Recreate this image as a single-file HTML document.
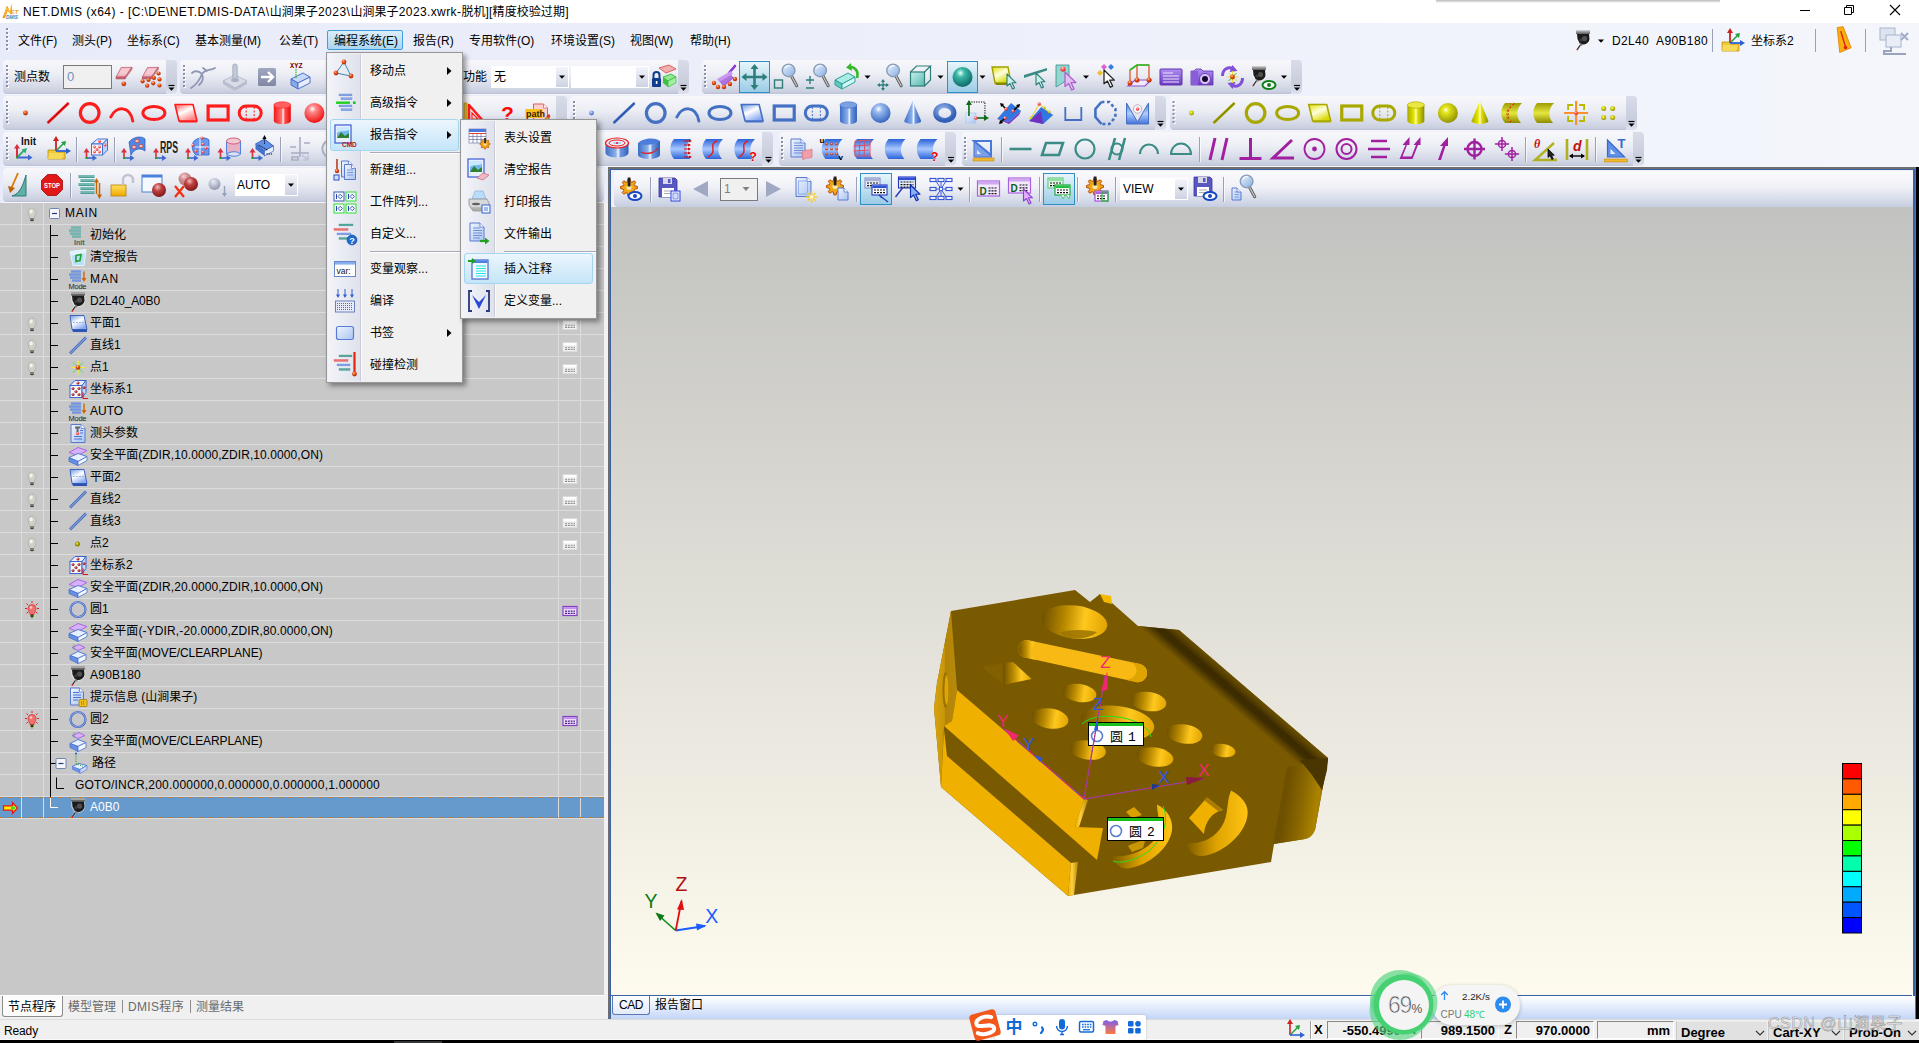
<!DOCTYPE html>
<html lang="zh"><head><meta charset="utf-8"><title>NET.DMIS</title><style>
html,body{margin:0;padding:0}
body{width:1919px;height:1043px;position:relative;overflow:hidden;background:linear-gradient(90deg,#e8ebf9 0%,#edf0fa 50%,#f4f6fc 100%);font-family:"Liberation Sans","Noto Sans CJK SC",sans-serif;font-size:12px;color:#000;line-height:1}
.a{position:absolute}
.t{position:absolute;white-space:nowrap;line-height:16px;height:16px}
.tb{position:absolute;background:linear-gradient(#f8f8fb 0%,#eceef5 42%,#d7dbe8 76%,#c9cfdf 94%,#bac1d6 100%);border-radius:4px 0 0 4px;box-shadow:0 1px 0 #f5f6fb}
.ov{position:absolute;width:11px;background:linear-gradient(#d9dce9 0%,#c8cddd 70%,#dfe2ee 100%);border-radius:0 4px 4px 0;box-shadow:0 1px 0 #f5f6fb}
.grip{position:absolute;width:2px;border-left:2px dotted #9aa0b8}
svg{position:absolute;overflow:visible}
</style></head><body>
<div class="a" style="left:0px;top:0px;width:1919px;height:23px;background:#fff"></div>
<div class="t" style="left:23px;top:4px;letter-spacing:0.445px;font-size:12px">NET.DMIS (x64) - [C:\DE\NET.DMIS-DATA\</div>
<div class="t" style="left:269.8px;top:4px;letter-spacing:-0.004px;font-size:12px">山涧果子</div>
<div class="t" style="left:317.9px;top:4px;letter-spacing:0.494px;font-size:12px">2023\</div>
<div class="t" style="left:350.6px;top:4px;letter-spacing:-0.004px;font-size:12px">山涧果子</div>
<div class="t" style="left:398.8px;top:4px;letter-spacing:0.381px;font-size:12px">2023.xwrk-</div>
<div class="t" style="left:461.5px;top:4px;letter-spacing:-0.008px;font-size:12px">脱机</div>
<div class="t" style="left:485.6px;top:4px;letter-spacing:0.164px;font-size:12px">][</div>
<div class="t" style="left:492.6px;top:4px;letter-spacing:0.064px;font-size:12px">精度校验过期</div>
<div class="t" style="left:565.2px;top:4px;letter-spacing:0.056px;font-size:12px">]</div>
<div class="a" style="left:327px;top:30px;width:76px;height:20px;background:linear-gradient(#dcedfa,#a9d6f1);border:1px solid #3e9fdb;border-radius:2px;box-sizing:border-box"></div>
<div class="t" style="left:18px;top:33px;">文件(F)</div>
<div class="t" style="left:72px;top:33px;">测头(P)</div>
<div class="t" style="left:127px;top:33px;">坐标系(C)</div>
<div class="t" style="left:195px;top:33px;">基本测量(M)</div>
<div class="t" style="left:279px;top:33px;">公差(T)</div>
<div class="t" style="left:334px;top:33px;">编程系统(E)</div>
<div class="t" style="left:413px;top:33px;">报告(R)</div>
<div class="t" style="left:469px;top:33px;">专用软件(O)</div>
<div class="t" style="left:551px;top:33px;">环境设置(S)</div>
<div class="t" style="left:630px;top:33px;">视图(W)</div>
<div class="t" style="left:690px;top:33px;">帮助(H)</div>
<div class="t" style="left:1612px;top:33px;letter-spacing:0.325px;">D2L40</div>
<div class="t" style="left:1656px;top:33px;letter-spacing:0.373px;">A90B180</div>
<div class="t" style="left:1751px;top:33px;">坐标系2</div>
<div class="tb" style="left:3px;top:60px;width:163px;height:34px"></div>
<div class="ov" style="left:166px;top:60px;height:34px"></div>
<div class="tb" style="left:180px;top:60px;width:498px;height:34px"></div>
<div class="ov" style="left:678px;top:60px;height:34px"></div>
<div class="tb" style="left:702px;top:60px;width:589px;height:34px"></div>
<div class="ov" style="left:1291px;top:60px;height:34px"></div>
<div class="tb" style="left:3px;top:96px;width:553px;height:34px"></div>
<div class="ov" style="left:556px;top:96px;height:34px"></div>
<div class="tb" style="left:570px;top:96px;width:585px;height:34px"></div>
<div class="ov" style="left:1155px;top:96px;height:34px"></div>
<div class="tb" style="left:1170px;top:96px;width:456px;height:34px"></div>
<div class="ov" style="left:1626px;top:96px;height:34px"></div>
<div class="tb" style="left:3px;top:132px;width:759px;height:34px"></div>
<div class="ov" style="left:762px;top:132px;height:34px"></div>
<div class="tb" style="left:779px;top:132px;width:166px;height:34px"></div>
<div class="ov" style="left:945px;top:132px;height:34px"></div>
<div class="tb" style="left:962px;top:132px;width:671px;height:34px"></div>
<div class="ov" style="left:1633px;top:132px;height:34px"></div>
<div class="tb" style="left:3px;top:168px;width:601px;height:34px;border-radius:4px"></div>
<div class="a" style="left:0px;top:203px;width:604px;height:792px;background:#c8c8c8"></div>
<div class="a" style="left:0px;top:224px;width:604px;height:1px;background:#dcdcdc"></div>
<div class="t" style="left:65px;top:205px;letter-spacing:0.750px;">MAIN</div>
<div class="a" style="left:0px;top:246px;width:604px;height:1px;background:#dcdcdc"></div>
<div class="t" style="left:90px;top:227px;">初始化</div>
<div class="a" style="left:0px;top:268px;width:604px;height:1px;background:#dcdcdc"></div>
<div class="t" style="left:90px;top:249px;">清空报告</div>
<div class="a" style="left:0px;top:290px;width:604px;height:1px;background:#dcdcdc"></div>
<div class="t" style="left:90px;top:271px;letter-spacing:0.776px;">MAN</div>
<div class="a" style="left:0px;top:312px;width:604px;height:1px;background:#dcdcdc"></div>
<div class="t" style="left:90px;top:293px;letter-spacing:-0.139px;">D2L40_A0B0</div>
<div class="a" style="left:0px;top:334px;width:604px;height:1px;background:#dcdcdc"></div>
<div class="t" style="left:90px;top:315px;">平面1</div>
<div class="a" style="left:0px;top:356px;width:604px;height:1px;background:#dcdcdc"></div>
<div class="t" style="left:90px;top:337px;">直线1</div>
<div class="a" style="left:0px;top:378px;width:604px;height:1px;background:#dcdcdc"></div>
<div class="t" style="left:90px;top:359px;">点1</div>
<div class="a" style="left:0px;top:400px;width:604px;height:1px;background:#dcdcdc"></div>
<div class="t" style="left:90px;top:381px;">坐标系1</div>
<div class="a" style="left:0px;top:422px;width:604px;height:1px;background:#dcdcdc"></div>
<div class="t" style="left:90px;top:403px;">AUTO</div>
<div class="a" style="left:0px;top:444px;width:604px;height:1px;background:#dcdcdc"></div>
<div class="t" style="left:90px;top:425px;">测头参数</div>
<div class="a" style="left:0px;top:466px;width:604px;height:1px;background:#dcdcdc"></div>
<div class="t" style="left:90px;top:447px;letter-spacing:0.086px;">安全平面(ZDIR,10.0000,ZDIR,10.0000,ON)</div>
<div class="a" style="left:0px;top:488px;width:604px;height:1px;background:#dcdcdc"></div>
<div class="t" style="left:90px;top:469px;">平面2</div>
<div class="a" style="left:0px;top:510px;width:604px;height:1px;background:#dcdcdc"></div>
<div class="t" style="left:90px;top:491px;">直线2</div>
<div class="a" style="left:0px;top:532px;width:604px;height:1px;background:#dcdcdc"></div>
<div class="t" style="left:90px;top:513px;">直线3</div>
<div class="a" style="left:0px;top:554px;width:604px;height:1px;background:#dcdcdc"></div>
<div class="t" style="left:90px;top:535px;">点2</div>
<div class="a" style="left:0px;top:576px;width:604px;height:1px;background:#dcdcdc"></div>
<div class="t" style="left:90px;top:557px;">坐标系2</div>
<div class="a" style="left:0px;top:598px;width:604px;height:1px;background:#dcdcdc"></div>
<div class="t" style="left:90px;top:579px;letter-spacing:0.086px;">安全平面(ZDIR,20.0000,ZDIR,10.0000,ON)</div>
<div class="a" style="left:0px;top:620px;width:604px;height:1px;background:#dcdcdc"></div>
<div class="t" style="left:90px;top:601px;">圆1</div>
<div class="a" style="left:0px;top:642px;width:604px;height:1px;background:#dcdcdc"></div>
<div class="t" style="left:90px;top:623px;letter-spacing:0.118px;">安全平面(-YDIR,-20.0000,ZDIR,80.0000,ON)</div>
<div class="a" style="left:0px;top:664px;width:604px;height:1px;background:#dcdcdc"></div>
<div class="t" style="left:90px;top:645px;letter-spacing:-0.073px;">安全平面(MOVE/CLEARPLANE)</div>
<div class="a" style="left:0px;top:686px;width:604px;height:1px;background:#dcdcdc"></div>
<div class="t" style="left:90px;top:667px;letter-spacing:0.230px;">A90B180</div>
<div class="a" style="left:0px;top:708px;width:604px;height:1px;background:#dcdcdc"></div>
<div class="t" style="left:90px;top:689px;">提示信息 (山涧果子)</div>
<div class="a" style="left:0px;top:730px;width:604px;height:1px;background:#dcdcdc"></div>
<div class="t" style="left:90px;top:711px;">圆2</div>
<div class="a" style="left:0px;top:752px;width:604px;height:1px;background:#dcdcdc"></div>
<div class="t" style="left:90px;top:733px;letter-spacing:-0.073px;">安全平面(MOVE/CLEARPLANE)</div>
<div class="a" style="left:0px;top:774px;width:604px;height:1px;background:#dcdcdc"></div>
<div class="t" style="left:92px;top:755px;">路径</div>
<div class="a" style="left:0px;top:796px;width:604px;height:1px;background:#dcdcdc"></div>
<div class="t" style="left:75px;top:777px;letter-spacing:0.220px;">GOTO/INCR,200.000000,0.000000,0.000000,1.000000</div>
<div class="a" style="left:0px;top:797px;width:604px;height:21px;background:#6699cc"></div>
<div class="a" style="left:0px;top:818px;width:604px;height:1px;background:#dcdcdc"></div>
<div class="t" style="left:90px;top:799px;color:#fff">A0B0</div>
<div class="a" style="left:21px;top:203px;width:1px;height:615px;background:#dcdcdc"></div>
<div class="a" style="left:43px;top:203px;width:1px;height:615px;background:#dcdcdc"></div>
<div class="a" style="left:558px;top:203px;width:1px;height:615px;background:#dcdcdc"></div>
<div class="a" style="left:580px;top:203px;width:1px;height:615px;background:#dcdcdc"></div>
<svg style="left:0;top:0" width="611" height="1043" viewBox="0 0 611 1043">
<path d="M50.5 225V797" stroke="#000" stroke-width="1"/>
<path d="M50 235.5H58" stroke="#000" stroke-width="1"/>
<path d="M50 257.5H58" stroke="#000" stroke-width="1"/>
<path d="M50 279.5H58" stroke="#000" stroke-width="1"/>
<path d="M50 301.5H58" stroke="#000" stroke-width="1"/>
<path d="M50 323.5H58" stroke="#000" stroke-width="1"/>
<path d="M50 345.5H58" stroke="#000" stroke-width="1"/>
<path d="M50 367.5H58" stroke="#000" stroke-width="1"/>
<path d="M50 389.5H58" stroke="#000" stroke-width="1"/>
<path d="M50 411.5H58" stroke="#000" stroke-width="1"/>
<path d="M50 433.5H58" stroke="#000" stroke-width="1"/>
<path d="M50 455.5H58" stroke="#000" stroke-width="1"/>
<path d="M50 477.5H58" stroke="#000" stroke-width="1"/>
<path d="M50 499.5H58" stroke="#000" stroke-width="1"/>
<path d="M50 521.5H58" stroke="#000" stroke-width="1"/>
<path d="M50 543.5H58" stroke="#000" stroke-width="1"/>
<path d="M50 565.5H58" stroke="#000" stroke-width="1"/>
<path d="M50 587.5H58" stroke="#000" stroke-width="1"/>
<path d="M50 609.5H58" stroke="#000" stroke-width="1"/>
<path d="M50 631.5H58" stroke="#000" stroke-width="1"/>
<path d="M50 653.5H58" stroke="#000" stroke-width="1"/>
<path d="M50 675.5H58" stroke="#000" stroke-width="1"/>
<path d="M50 697.5H58" stroke="#000" stroke-width="1"/>
<path d="M50 719.5H58" stroke="#000" stroke-width="1"/>
<path d="M50 741.5H58" stroke="#000" stroke-width="1"/>
<path d="M50 763.5H56" stroke="#000" stroke-width="1"/>
<path d="M56.5 777.5V788.5H64" fill="none" stroke="#000" stroke-width="1"/>
<path d="M50.5 797V807.5H58" fill="none" stroke="#fff" stroke-width="1"/>
<path d="M0 797.500H604M0 817.500H604" stroke="#c86a10" stroke-width="1" stroke-dasharray="1 1.5"/>
<rect x="49.5" y="208.5" width="10" height="10" rx="1" fill="#f4f6fc" stroke="#7088b0" stroke-width="1"/><path d="M52.0 213.5H57.0" stroke="#283c70" stroke-width="1.2"/>
<rect x="56" y="758.5" width="10" height="10" rx="1" fill="#f4f6fc" stroke="#7088b0" stroke-width="1"/><path d="M58.5 763.5H63.5" stroke="#283c70" stroke-width="1.2"/>
<g transform="translate(78,235.5)"><path d="M-7 -8H3M-9 -5H3M-8 -2H3M-6 1H3" stroke="#4a9c94" stroke-width="1.9"/><path d="M-7 -8.300H3M-9 -5.300H3M-8 -2.300H3M-6 .7H3" stroke="#a8dcd8" stroke-width=".6"/><text x="-4" y="9" font-size="7" font-weight="bold" fill="#2c6c68" font-family="Liberation Sans,sans-serif">Init</text></g>
<g transform="translate(78,257.5)"><path d="M-8 -6L8 -8L6 8H-5Z" fill="#b8e0f8" stroke="#e8f4fc" stroke-width="1"/><path d="M-8 -6L8 -8L7 -4L-7 -2Z" fill="#e0f2fc"/><path d="M-2 -2L3 -3L2 3L-2 4Z" fill="none" stroke="#20a030" stroke-width="1.6"/></g>
<g transform="translate(78,279.5)"><path d="M-7 -8H3M-9 -5H3M-8 -2H3M-6 1H3" stroke="#4a78d8" stroke-width="1.9"/><path d="M-7 -8.300H3M-9 -5.300H3M-8 -2.300H3M-6 .7H3" stroke="#a8c4f8" stroke-width=".6"/><path d="M6 -8V0" stroke="#d06800" stroke-width="1.4"/><path d="M3.5 -1.5L6 2.5L8.5 -1.5Z" fill="#d06800"/><text x="-9.5" y="9.5" font-size="7.5" fill="#222" font-family="Liberation Sans,sans-serif" textLength="18">Mode</text></g>
<g transform="translate(78,301.5)"><g transform="translate(0,0)"><g transform="scale(1)"><path d="M-6.500 -6.500H6.500L7 -1C6.500 3.500 2 5.500 -1 5L-3.500 4.500L-6.500 -1Z" fill="#fff" opacity=".55" stroke="#fff" stroke-width="1.200" stroke-opacity=".5"/><rect x="-7" y="-9.500" width="14" height="3.500" fill="#a4a4a4"/><rect x="-7" y="-7.500" width="14" height="1.500" fill="#6a6a6a"/><path d="M-6 -6H6L6.500 -1C6 3 2 5 -1 4.500L-3 4L-5.500 -1Z" fill="#1c1c1c"/><circle cx="1.500" cy="-1.500" r="2.600" fill="#505050"/><circle cx="-2" cy="0" r="1.600" fill="#3a3a3a"/><path d="M-2 4L-5.500 9.200" stroke="#fff" stroke-width="2.400" opacity=".5"/><path d="M-2 4L-5.500 9.200" stroke="#2a2a2a" stroke-width="1.300"/><path d="M-3 3L0 5L-2.500 6.500Z" fill="#888"/><circle cx="-5.700" cy="9.500" r=".85" fill="#e01010"/></g></g></g>
<g transform="translate(78,323.5)"><path d="M-8 -8H6L9 6H-6Z" fill="url(#pgB)" stroke="#3c64c0" stroke-width="1"/><path d="M-6 6H9V8.5H-5Z" fill="#2c54b0"/><path d="M-5 -1H6" stroke="#8aa4d8" stroke-width=".8" stroke-dasharray="2 1"/></g>
<g transform="translate(78,345.5)"><path d="M-8 8L8 -8" stroke="#3c64c0" stroke-width="2.6"/><path d="M-8 8L8 -8" stroke="#c8d8f8" stroke-width=".8"/></g>
<g transform="translate(78,367.5)"><path d="M-7 0H7M0 -7V7" stroke="#f0f020" stroke-width="1.2"/><path d="M-5 -5L5 5M-5 5L5 -5" stroke="#40e040" stroke-width=".9"/><circle cx="0" cy="0" r="2.3" fill="url(#rsO)"/></g>
<g transform="translate(78,389.5)"><path d="M-8 -4L-3 -9H8L4 -4Z" fill="#e8f0ff" stroke="#3c64d0" stroke-width="1"/><rect x="-8" y="-4" width="12" height="12" fill="#f4f8ff" stroke="#3c64d0" stroke-width="1"/><path d="M4 -4L8 -9V3L4 8Z" fill="#c8d8f8" stroke="#3c64d0" stroke-width="1"/><circle cx="-5" cy="-1" r="1.5" fill="url(#rsD)"/><circle cx="1" cy="-1" r="1.5" fill="url(#rsD)"/><circle cx="-5" cy="5" r="1.5" fill="url(#rsD)"/><circle cx="1" cy="5" r="1.5" fill="url(#rsD)"/><circle cx="-2" cy="2" r="1.5" fill="url(#rsD)"/><circle cx="0" cy="-6.5" r="1.5" fill="url(#rsD)"/><circle cx="6" cy="-2" r="1.5" fill="url(#rsD)"/><path d="M5 9V3M5 9H10" stroke="#d02020" stroke-width="1.2"/></g>
<g transform="translate(78,411.5)"><path d="M-7 -8H3M-9 -5H3M-8 -2H3M-6 1H3" stroke="#4a78d8" stroke-width="1.9"/><path d="M-7 -8.300H3M-9 -5.300H3M-8 -2.300H3M-6 .7H3" stroke="#a8c4f8" stroke-width=".6"/><path d="M6 -8V0" stroke="#d06800" stroke-width="1.4"/><path d="M3.5 -1.5L6 2.5L8.5 -1.5Z" fill="#d06800"/><text x="-9.5" y="9.5" font-size="7.5" fill="#222" font-family="Liberation Sans,sans-serif" textLength="18">Mode</text></g>
<g transform="translate(78,433.5)"><g transform="translate(0,0)"><path d="M-7.0 -9.0H3.0L7.0 -5.0V9.0H-7.0Z" fill="url(#docG)" stroke="#5a7ad0" stroke-width="1"/><path d="M3.0 -9.0V-5.0H7.0" fill="#fff" stroke="#5a7ad0" stroke-width=".8"/></g><path d="M-3 -6H2M-.5 -6V-1" stroke="#666" stroke-width="2"/><circle cx="-0.5" cy="0" r="1.6" fill="url(#rsR)"/><path d="M-4 3H4M-4 5.5H4M2 -3H5M2 -.5H5" stroke="#3c64d0" stroke-width=".9"/></g>
<g transform="translate(78,455.5)"><path d="M-9 -3L0 -8L9 -5L0 0Z" fill="#d8b0f8" stroke="#a060e0" stroke-width=".9"/><path d="M-9 2L0 -2L9 1L0 6Z" fill="#e8f0ff" stroke="#4a70d0" stroke-width=".9"/><path d="M-9 2V6L0 10V6Z" fill="#6890e0" stroke="#4a70d0" stroke-width=".8"/><path d="M0 6L9 1V5L0 10Z" fill="#f4f8ff" stroke="#4a70d0" stroke-width=".8"/></g>
<g transform="translate(78,477.5)"><path d="M-8 -8H6L9 6H-6Z" fill="url(#pgB)" stroke="#3c64c0" stroke-width="1"/><path d="M-6 6H9V8.5H-5Z" fill="#2c54b0"/><path d="M-5 -1H6" stroke="#8aa4d8" stroke-width=".8" stroke-dasharray="2 1"/></g>
<g transform="translate(78,499.5)"><path d="M-8 8L8 -8" stroke="#3c64c0" stroke-width="2.6"/><path d="M-8 8L8 -8" stroke="#c8d8f8" stroke-width=".8"/></g>
<g transform="translate(78,521.5)"><path d="M-8 8L8 -8" stroke="#3c64c0" stroke-width="2.6"/><path d="M-8 8L8 -8" stroke="#c8d8f8" stroke-width=".8"/></g>
<g transform="translate(78,543.5)"><circle cx="-.5" cy=".5" r="2.500" fill="#8c8c00"/><circle cx="-1" cy="0" r="1.300" fill="#d8d820"/></g>
<g transform="translate(78,565.5)"><path d="M-8 -4L-3 -9H8L4 -4Z" fill="#e8f0ff" stroke="#3c64d0" stroke-width="1"/><rect x="-8" y="-4" width="12" height="12" fill="#f4f8ff" stroke="#3c64d0" stroke-width="1"/><path d="M4 -4L8 -9V3L4 8Z" fill="#c8d8f8" stroke="#3c64d0" stroke-width="1"/><circle cx="-5" cy="-1" r="1.5" fill="url(#rsD)"/><circle cx="1" cy="-1" r="1.5" fill="url(#rsD)"/><circle cx="-5" cy="5" r="1.5" fill="url(#rsD)"/><circle cx="1" cy="5" r="1.5" fill="url(#rsD)"/><circle cx="-2" cy="2" r="1.5" fill="url(#rsD)"/><circle cx="0" cy="-6.5" r="1.5" fill="url(#rsD)"/><circle cx="6" cy="-2" r="1.5" fill="url(#rsD)"/><path d="M5 9V3M5 9H10" stroke="#d02020" stroke-width="1.2"/></g>
<g transform="translate(78,587.5)"><path d="M-9 -3L0 -8L9 -5L0 0Z" fill="#d8b0f8" stroke="#a060e0" stroke-width=".9"/><path d="M-9 2L0 -2L9 1L0 6Z" fill="#e8f0ff" stroke="#4a70d0" stroke-width=".9"/><path d="M-9 2V6L0 10V6Z" fill="#6890e0" stroke="#4a70d0" stroke-width=".8"/><path d="M0 6L9 1V5L0 10Z" fill="#f4f8ff" stroke="#4a70d0" stroke-width=".8"/></g>
<g transform="translate(78,609.5)"><circle r="7.500" fill="none" stroke="#3c60c0" stroke-width="2.200"/><circle r="7.500" fill="none" stroke="#a8c0f0" stroke-width=".8"/></g>
<g transform="translate(78,631.5)"><path d="M-9 -3L0 -8L9 -5L0 0Z" fill="#d8b0f8" stroke="#a060e0" stroke-width=".9"/><path d="M-9 2L0 -2L9 1L0 6Z" fill="#e8f0ff" stroke="#4a70d0" stroke-width=".9"/><path d="M-9 2V6L0 10V6Z" fill="#6890e0" stroke="#4a70d0" stroke-width=".8"/><path d="M0 6L9 1V5L0 10Z" fill="#f4f8ff" stroke="#4a70d0" stroke-width=".8"/></g>
<g transform="translate(78,653.5)"><path d="M-6 -6L1 -9L7 -6L0 -3Z" fill="#d8b0f8" stroke="#a060e0" stroke-width=".9"/><path d="M-4 -9V-3" stroke="#20b020" stroke-width="1" stroke-dasharray="1 1"/><path d="M-8 2L0 -2L8 1L0 5Z" fill="#e8f0ff" stroke="#4a70d0" stroke-width=".9"/><path d="M-8 2V6L0 10V5Z" fill="#6890e0" stroke="#4a70d0" stroke-width=".8"/><path d="M0 5L8 1V6L0 10Z" fill="#f4f8ff" stroke="#4a70d0" stroke-width=".8"/></g>
<g transform="translate(78,675.5)"><g transform="translate(0,0)"><g transform="scale(1)"><path d="M-6.500 -6.500H6.500L7 -1C6.500 3.500 2 5.500 -1 5L-3.500 4.500L-6.500 -1Z" fill="#fff" opacity=".55" stroke="#fff" stroke-width="1.200" stroke-opacity=".5"/><rect x="-7" y="-9.500" width="14" height="3.500" fill="#a4a4a4"/><rect x="-7" y="-7.500" width="14" height="1.500" fill="#6a6a6a"/><path d="M-6 -6H6L6.500 -1C6 3 2 5 -1 4.500L-3 4L-5.500 -1Z" fill="#1c1c1c"/><circle cx="1.500" cy="-1.500" r="2.600" fill="#505050"/><circle cx="-2" cy="0" r="1.600" fill="#3a3a3a"/><path d="M-2 4L-5.500 9.200" stroke="#fff" stroke-width="2.400" opacity=".5"/><path d="M-2 4L-5.500 9.200" stroke="#2a2a2a" stroke-width="1.300"/><path d="M-3 3L0 5L-2.500 6.500Z" fill="#888"/><circle cx="-5.700" cy="9.500" r=".85" fill="#e01010"/></g></g></g>
<g transform="translate(78,697.5)"><g transform="translate(-1,-1)"><path d="M-6.5 -8.5H2.5L6.5 -4.5V8.5H-6.5Z" fill="url(#docG)" stroke="#5a7ad0" stroke-width="1"/><path d="M2.5 -8.5V-4.5H6.5" fill="#fff" stroke="#5a7ad0" stroke-width=".8"/></g><path d="M-5 -5H1M-5 -2.5H3M-5 0H3M-5 2.5H0" stroke="#3c64d0" stroke-width=".9"/><rect x="1" y="2" width="8" height="7" rx="1" fill="#f0c020" stroke="#a07000" stroke-width=".7"/><path d="M3 4.5H7M3 6.5H7" stroke="#604000" stroke-width=".8" stroke-dasharray="1 1"/></g>
<g transform="translate(78,719.5)"><circle r="7.500" fill="none" stroke="#3c60c0" stroke-width="2.200"/><circle r="7.500" fill="none" stroke="#a8c0f0" stroke-width=".8"/></g>
<g transform="translate(78,741.5)"><path d="M-6 -6L1 -9L7 -6L0 -3Z" fill="#d8b0f8" stroke="#a060e0" stroke-width=".9"/><path d="M-4 -9V-3" stroke="#20b020" stroke-width="1" stroke-dasharray="1 1"/><path d="M-8 2L0 -2L8 1L0 5Z" fill="#e8f0ff" stroke="#4a70d0" stroke-width=".9"/><path d="M-8 2V6L0 10V5Z" fill="#6890e0" stroke="#4a70d0" stroke-width=".8"/><path d="M0 5L8 1V6L0 10Z" fill="#f4f8ff" stroke="#4a70d0" stroke-width=".8"/></g>
<g transform="translate(78,807.5)"><g transform="translate(0,0)"><g transform="scale(1)"><path d="M-6.500 -6.500H6.500L7 -1C6.500 3.500 2 5.500 -1 5L-3.500 4.500L-6.500 -1Z" fill="#fff" opacity=".55" stroke="#fff" stroke-width="1.200" stroke-opacity=".5"/><rect x="-7" y="-9.500" width="14" height="3.500" fill="#a4a4a4"/><rect x="-7" y="-7.500" width="14" height="1.500" fill="#6a6a6a"/><path d="M-6 -6H6L6.500 -1C6 3 2 5 -1 4.500L-3 4L-5.500 -1Z" fill="#1c1c1c"/><circle cx="1.500" cy="-1.500" r="2.600" fill="#505050"/><circle cx="-2" cy="0" r="1.600" fill="#3a3a3a"/><path d="M-2 4L-5.500 9.200" stroke="#fff" stroke-width="2.400" opacity=".5"/><path d="M-2 4L-5.500 9.200" stroke="#2a2a2a" stroke-width="1.300"/><path d="M-3 3L0 5L-2.500 6.500Z" fill="#888"/><circle cx="-5.700" cy="9.500" r=".85" fill="#e01010"/></g></g></g>
<g transform="translate(80,763.5)"><path d="M-8 3L-1 0L7 2L0 6Z" fill="#e8f0ff" stroke="#4a70d0" stroke-width=".9"/><path d="M-8 3V6L0 10V6Z" fill="#6890e0"/><path d="M0 6L7 2V6L0 10Z" fill="#c8d8f8" stroke="#4a70d0" stroke-width=".6"/><path d="M-4 -10V0L3 3" fill="none" stroke="#20a020" stroke-width="1" stroke-dasharray="1.2 1.2"/><circle cx="-4" cy="-10" r="1" fill="#2060d0"/></g>
<g transform="translate(32,214.5)"><path d="M0 -6.5A4 4.3 0 0 1 4 -2C4 1 2 2 2 4H-2C-2 2 -4 1 -4 -2A4 4.3 0 0 1 0 -6.5Z" fill="#cfcfc6" stroke="#a8a8a0" stroke-width=".6"/><ellipse cx="-.8" cy="-3" rx="1.6" ry="2" fill="#f4f4ec"/><rect x="-1.6" y="4" width="3.2" height="2.6" fill="#3a3a3a"/><circle cx="0" cy="5" r=".6" fill="#d0d0a0"/></g>
<g transform="translate(32,324.5)"><path d="M0 -6.5A4 4.3 0 0 1 4 -2C4 1 2 2 2 4H-2C-2 2 -4 1 -4 -2A4 4.3 0 0 1 0 -6.5Z" fill="#cfcfc6" stroke="#a8a8a0" stroke-width=".6"/><ellipse cx="-.8" cy="-3" rx="1.6" ry="2" fill="#f4f4ec"/><rect x="-1.6" y="4" width="3.2" height="2.6" fill="#3a3a3a"/><circle cx="0" cy="5" r=".6" fill="#d0d0a0"/></g>
<g transform="translate(32,346.5)"><path d="M0 -6.5A4 4.3 0 0 1 4 -2C4 1 2 2 2 4H-2C-2 2 -4 1 -4 -2A4 4.3 0 0 1 0 -6.5Z" fill="#cfcfc6" stroke="#a8a8a0" stroke-width=".6"/><ellipse cx="-.8" cy="-3" rx="1.6" ry="2" fill="#f4f4ec"/><rect x="-1.6" y="4" width="3.2" height="2.6" fill="#3a3a3a"/><circle cx="0" cy="5" r=".6" fill="#d0d0a0"/></g>
<g transform="translate(32,368.5)"><path d="M0 -6.5A4 4.3 0 0 1 4 -2C4 1 2 2 2 4H-2C-2 2 -4 1 -4 -2A4 4.3 0 0 1 0 -6.5Z" fill="#cfcfc6" stroke="#a8a8a0" stroke-width=".6"/><ellipse cx="-.8" cy="-3" rx="1.6" ry="2" fill="#f4f4ec"/><rect x="-1.6" y="4" width="3.2" height="2.6" fill="#3a3a3a"/><circle cx="0" cy="5" r=".6" fill="#d0d0a0"/></g>
<g transform="translate(32,478.5)"><path d="M0 -6.5A4 4.3 0 0 1 4 -2C4 1 2 2 2 4H-2C-2 2 -4 1 -4 -2A4 4.3 0 0 1 0 -6.5Z" fill="#cfcfc6" stroke="#a8a8a0" stroke-width=".6"/><ellipse cx="-.8" cy="-3" rx="1.6" ry="2" fill="#f4f4ec"/><rect x="-1.6" y="4" width="3.2" height="2.6" fill="#3a3a3a"/><circle cx="0" cy="5" r=".6" fill="#d0d0a0"/></g>
<g transform="translate(32,500.5)"><path d="M0 -6.5A4 4.3 0 0 1 4 -2C4 1 2 2 2 4H-2C-2 2 -4 1 -4 -2A4 4.3 0 0 1 0 -6.5Z" fill="#cfcfc6" stroke="#a8a8a0" stroke-width=".6"/><ellipse cx="-.8" cy="-3" rx="1.6" ry="2" fill="#f4f4ec"/><rect x="-1.6" y="4" width="3.2" height="2.6" fill="#3a3a3a"/><circle cx="0" cy="5" r=".6" fill="#d0d0a0"/></g>
<g transform="translate(32,522.5)"><path d="M0 -6.5A4 4.3 0 0 1 4 -2C4 1 2 2 2 4H-2C-2 2 -4 1 -4 -2A4 4.3 0 0 1 0 -6.5Z" fill="#cfcfc6" stroke="#a8a8a0" stroke-width=".6"/><ellipse cx="-.8" cy="-3" rx="1.6" ry="2" fill="#f4f4ec"/><rect x="-1.6" y="4" width="3.2" height="2.6" fill="#3a3a3a"/><circle cx="0" cy="5" r=".6" fill="#d0d0a0"/></g>
<g transform="translate(32,544.5)"><path d="M0 -6.5A4 4.3 0 0 1 4 -2C4 1 2 2 2 4H-2C-2 2 -4 1 -4 -2A4 4.3 0 0 1 0 -6.5Z" fill="#cfcfc6" stroke="#a8a8a0" stroke-width=".6"/><ellipse cx="-.8" cy="-3" rx="1.6" ry="2" fill="#f4f4ec"/><rect x="-1.6" y="4" width="3.2" height="2.6" fill="#3a3a3a"/><circle cx="0" cy="5" r=".6" fill="#d0d0a0"/></g>
<g transform="translate(32,610.5)"><path d="M-7 -2H-5M5 -2H7M-5.5 -7L-4 -5.5M5.5 -7L4 -5.5M0 -9.5V-7.5M-5.5 3L-4 1.5M5.5 3L4 1.5" stroke="#e02020" stroke-width="1"/><path d="M0 -6A4 4 0 0 1 4 -2C4 1 2 2 2 4H-2C-2 2 -4 1 -4 -2A4 4 0 0 1 0 -6Z" fill="#f07070" stroke="#d03030" stroke-width=".7"/><circle cx="-1" cy="-3" r="1.3" fill="#ffd0d0"/><rect x="-1.5" y="4" width="3" height="2.5" fill="#404000"/><path d="M0 6.5V8" stroke="#30a030" stroke-width="1.2"/></g>
<g transform="translate(32,720.5)"><path d="M-7 -2H-5M5 -2H7M-5.5 -7L-4 -5.5M5.5 -7L4 -5.5M0 -9.5V-7.5M-5.5 3L-4 1.5M5.5 3L4 1.5" stroke="#e02020" stroke-width="1"/><path d="M0 -6A4 4 0 0 1 4 -2C4 1 2 2 2 4H-2C-2 2 -4 1 -4 -2A4 4 0 0 1 0 -6Z" fill="#f07070" stroke="#d03030" stroke-width=".7"/><circle cx="-1" cy="-3" r="1.3" fill="#ffd0d0"/><rect x="-1.5" y="4" width="3" height="2.5" fill="#404000"/><path d="M0 6.5V8" stroke="#30a030" stroke-width="1.2"/></g>
<g transform="translate(570,325.0)"><rect x="-7" y="-4.5" width="14" height="9" fill="#f4f4f4" stroke="#dadada" stroke-width="1"/><rect x="-6.4" y="-3.9" width="12.8" height="1.8" fill="#fff"/><path d="M-5 .2H5M-5 2.4H5" stroke="#8a8a8a" stroke-width="1.1" stroke-dasharray="2 .8"/></g>
<g transform="translate(570,347.0)"><rect x="-7" y="-4.5" width="14" height="9" fill="#f4f4f4" stroke="#dadada" stroke-width="1"/><rect x="-6.4" y="-3.9" width="12.8" height="1.8" fill="#fff"/><path d="M-5 .2H5M-5 2.4H5" stroke="#8a8a8a" stroke-width="1.1" stroke-dasharray="2 .8"/></g>
<g transform="translate(570,369.0)"><rect x="-7" y="-4.5" width="14" height="9" fill="#f4f4f4" stroke="#dadada" stroke-width="1"/><rect x="-6.4" y="-3.9" width="12.8" height="1.8" fill="#fff"/><path d="M-5 .2H5M-5 2.4H5" stroke="#8a8a8a" stroke-width="1.1" stroke-dasharray="2 .8"/></g>
<g transform="translate(570,479.0)"><rect x="-7" y="-4.5" width="14" height="9" fill="#f4f4f4" stroke="#dadada" stroke-width="1"/><rect x="-6.4" y="-3.9" width="12.8" height="1.8" fill="#fff"/><path d="M-5 .2H5M-5 2.4H5" stroke="#8a8a8a" stroke-width="1.1" stroke-dasharray="2 .8"/></g>
<g transform="translate(570,501.0)"><rect x="-7" y="-4.5" width="14" height="9" fill="#f4f4f4" stroke="#dadada" stroke-width="1"/><rect x="-6.4" y="-3.9" width="12.8" height="1.8" fill="#fff"/><path d="M-5 .2H5M-5 2.4H5" stroke="#8a8a8a" stroke-width="1.1" stroke-dasharray="2 .8"/></g>
<g transform="translate(570,523.0)"><rect x="-7" y="-4.5" width="14" height="9" fill="#f4f4f4" stroke="#dadada" stroke-width="1"/><rect x="-6.4" y="-3.9" width="12.8" height="1.8" fill="#fff"/><path d="M-5 .2H5M-5 2.4H5" stroke="#8a8a8a" stroke-width="1.1" stroke-dasharray="2 .8"/></g>
<g transform="translate(570,545.0)"><rect x="-7" y="-4.5" width="14" height="9" fill="#f4f4f4" stroke="#dadada" stroke-width="1"/><rect x="-6.4" y="-3.9" width="12.8" height="1.8" fill="#fff"/><path d="M-5 .2H5M-5 2.4H5" stroke="#8a8a8a" stroke-width="1.1" stroke-dasharray="2 .8"/></g>
<g transform="translate(570,611.0)"><rect x="-7" y="-4.5" width="14" height="9" fill="#f0e0ff" stroke="#8040c0" stroke-width="1.2"/><rect x="-6.4" y="-3.9" width="12.8" height="2" fill="#c090e8"/><path d="M-5 .2H5M-5 2.4H5" stroke="#4a2080" stroke-width="1.2" stroke-dasharray="2 .8"/></g>
<g transform="translate(570,721.0)"><rect x="-7" y="-4.5" width="14" height="9" fill="#f0e0ff" stroke="#8040c0" stroke-width="1.2"/><rect x="-6.4" y="-3.9" width="12.8" height="2" fill="#c090e8"/><path d="M-5 .2H5M-5 2.4H5" stroke="#4a2080" stroke-width="1.2" stroke-dasharray="2 .8"/></g>
<path d="M3.500 805.8H12.500V802.5L17.500 808.0L12.500 813.5V810.2H3.500Z" fill="#ffee00" stroke="#ee1010" stroke-width="1.200" stroke-linejoin="miter"/><path d="M11 806.5H14L15.500 808.0L14 809.5H11Z" fill="#30e030"/>
</svg>
<div class="a" style="left:0px;top:995px;width:604px;height:24px;background:#f0f0f0"></div>
<div class="a" style="left:0px;top:995px;width:604px;height:1px;background:#fff"></div>
<div class="a" style="left:2px;top:996px;width:61px;height:21px;background:#fcfcfc;border:1px solid #8c8c8c;border-top:none;border-radius:0 0 3px 3px;box-sizing:border-box"></div>
<div class="t" style="left:8px;top:999px;">节点程序</div>
<div class="t" style="left:68px;top:999px;color:#6a6a6a">模型管理</div>
<div class="t" style="left:128px;top:999px;letter-spacing:0.331px;color:#6a6a6a">DMIS程序</div>
<div class="t" style="left:196px;top:999px;color:#6a6a6a">测量结果</div>
<div class="a" style="left:122px;top:1000px;width:1px;height:13px;background:#8c8c8c"></div>
<div class="a" style="left:190px;top:1000px;width:1px;height:13px;background:#8c8c8c"></div>
<div class="a" style="left:0px;top:1019px;width:1919px;height:21px;background:#f0f0f0"></div>
<div class="a" style="left:0px;top:1019px;width:1919px;height:1px;background:#dcdcdc"></div>
<div class="t" style="left:4px;top:1023px;letter-spacing:-0.138px;">Ready</div>
<div class="a" style="left:604px;top:203px;width:4px;height:815px;background:#f2f2f4"></div>
<div class="a" style="left:608px;top:167px;width:1308px;height:852px;background:#6e6e6e"></div>
<div class="a" style="left:610px;top:169px;width:1305px;height:850px;background:#3c62a6"></div>
<div class="a" style="left:611px;top:170px;width:1302px;height:849px;background:#fff"></div>
<div class="a" style="left:611px;top:170px;width:1302px;height:37px;background:#eef0f8"></div>
<div class="a" style="left:614px;top:171px;width:1299px;height:36px;background:linear-gradient(#fbfbfd 0%,#f0f1f7 45%,#d6dbe9 80%,#c5cde0 100%);border-radius:4px 0 0 4px"></div>
<div class="a" style="left:611px;top:207px;width:1302px;height:788px;background:linear-gradient(#c2c2c0,#fefbee)"></div>
<div class="a" style="left:611px;top:995px;width:1301px;height:1px;background:#3c62a6"></div>
<div class="a" style="left:611px;top:996px;width:1304px;height:23px;background:linear-gradient(#ffffff 0%,#e6eefc 45%,#c3d5f6 100%)"></div>
<div class="a" style="left:1913px;top:170px;width:1px;height:826px;background:#3c62a6"></div>
<div class="a" style="left:612px;top:996px;width:38px;height:19px;background:linear-gradient(#fdfeff,#e3ebfa);border:1px solid #5a78b4;border-top:none;box-sizing:border-box;border-radius:0 0 3px 3px"></div>
<div class="t" style="left:619px;top:997px;letter-spacing:-0.448px;">CAD</div>
<div class="t" style="left:655px;top:997px;">报告窗口</div>
<svg style="left:0;top:0" width="1919" height="1043" viewBox="0 0 1919 1043">
<defs>
<linearGradient id="hg" x1="0" x2="1" y1="0" y2="0"><stop offset="0" stop-color="#6e5000"/><stop offset=".35" stop-color="#b88800"/><stop offset=".65" stop-color="#ffc81e"/><stop offset="1" stop-color="#e0a400"/></linearGradient>
<linearGradient id="lf" x1="0" x2="1" y1="0" y2="0"><stop offset="0" stop-color="#d9a30c"/><stop offset=".45" stop-color="#c8960a"/><stop offset=".5" stop-color="#b28408"/><stop offset="1" stop-color="#b88a0a"/></linearGradient>
<linearGradient id="fil" gradientUnits="userSpaceOnUse" x1="1238.6" y1="681.2" x2="1223.1" y2="699.2"><stop offset="0" stop-color="#6c5000"/><stop offset=".2" stop-color="#564000"/><stop offset=".4" stop-color="#3c2b00"/><stop offset=".6" stop-color="#3e2d00"/><stop offset=".82" stop-color="#604700"/><stop offset="1" stop-color="#7a5a00"/></linearGradient>
<linearGradient id="rp" gradientUnits="userSpaceOnUse" x1="1285" y1="800" x2="1325" y2="806"><stop offset="0" stop-color="#6d5000"/><stop offset=".4" stop-color="#886600"/><stop offset=".8" stop-color="#ac8300"/><stop offset="1" stop-color="#927000"/></linearGradient>
<linearGradient id="ce" x1="0" x2="1" y1="0" y2="0"><stop offset="0" stop-color="#f0b000"/><stop offset=".4" stop-color="#ffd040"/><stop offset="1" stop-color="#b88800"/></linearGradient>
<linearGradient id="cr" x1="0" x2="1" y1="0" y2="0"><stop offset="0" stop-color="#7a5a00"/><stop offset=".5" stop-color="#e0a400"/><stop offset="1" stop-color="#ffc414"/></linearGradient>
</defs>
<path d="M951 611L1075 590L1090 602L1100 594L1112 603L1138 626L1179 630L1328 758L1326 771L1323 786L1315 830L1305 839L1274 844L1271 862L1068 896L941 787L934 708L937 683Z" fill="#7a5a00"/>
<path d="M1100 594L1111 596L1112 604L1104 602Z" fill="#f5b800"/>
<path d="M1138 626L1179 630L1328 758L1322 786L1298 763.5Z" fill="url(#fil)"/>
<path d="M1287 767L1328 760L1326 771L1323 786L1315 830C1313 836 1309 838.5 1305 839L1273 844Z" fill="url(#rp)"/>
<path d="M1300 760L1328 758L1327 770L1322 790L1312 775Z" fill="#4a3600"/>
<path d="M951 611L957 690L952 721L944 726L941 787L934 708L937 683Z" fill="url(#lf)"/>
<ellipse cx="945.5" cy="690" rx="3" ry="18" fill="#9a7200"/><ellipse cx="946.5" cy="690" rx="2" ry="15" fill="#e0a400"/>
<path d="M957 690L1084 799L1075 827L1103 828L1097 860L944 726L952 721Z" fill="#f0b000"/>
<path d="M947 756L1071 863L1068 896L941 787L944 730Z" fill="#f0b000"/>
<path d="M1084 799L1088 800L1079 827L1075 827Z" fill="url(#ce)"/>
<path d="M1071 863L1078 862L1074 895L1068 896Z" fill="url(#ce)"/>
<ellipse cx="1074.5" cy="622" rx="33" ry="16.5" fill="url(#hg)" transform="rotate(7 1074.5 622)"/>
<path d="M1060 632.5C1070 629 1086 629.5 1097 632C1092 637 1082 639 1072 638.5C1067 638 1062 636 1060 632.5Z" fill="#9a7200" opacity=".85"/>
<path d="M1027 640L1140 664A9 9 0 0 1 1136 682L1023 657A9 9 0 0 1 1027 640Z" fill="#f8b914"/>
<path d="M1027 640A9 9 0 0 0 1023 657L1036 660A 10 9 0 0 1 1040 643Z" fill="url(#hg)"/>
<path d="M1140 664A9 9 0 0 1 1136 682L1125 679.5A 10 9 0 0 0 1128 661.5Z" fill="#e0a400"/>
<path d="M982 667L1003 663L1003 684.5Z" fill="#806000"/>
<path d="M1003 663L1013 662L1031.500 679L1003 685Z" fill="url(#hg)"/>
<ellipse cx="1079.5" cy="693" rx="17" ry="9" fill="url(#hg)" transform="rotate(9 1079.5 693)"/>
<ellipse cx="1148.5" cy="701.5" rx="18" ry="9.5" fill="url(#hg)" transform="rotate(9 1148.5 701.5)"/>
<ellipse cx="1050" cy="718.5" rx="18.5" ry="10" fill="url(#hg)" transform="rotate(9 1050 718.5)"/>
<ellipse cx="1184.5" cy="734" rx="18" ry="9.5" fill="url(#hg)" transform="rotate(9 1184.5 734)"/>
<ellipse cx="1088" cy="750" rx="18" ry="9.5" fill="url(#hg)" transform="rotate(9 1088 750)"/>
<ellipse cx="1155" cy="757" rx="18.5" ry="9.5" fill="url(#hg)" transform="rotate(9 1155 757)"/>
<ellipse cx="1223" cy="750.5" rx="12.5" ry="6.5" fill="url(#hg)" transform="rotate(9 1223 750.5)"/>
<ellipse cx="1117.5" cy="723" rx="37" ry="17" fill="url(#hg)" transform="rotate(8 1117.5 723)"/>
<path d="M1231 790.5C1243 797 1249 806 1247.5 815C1246 832 1225 853 1203 856C1194 857 1188 850 1186 843C1200 845 1215 838 1222 826C1229 815 1226 802 1231 790.5Z" fill="url(#cr)"/>
<path d="M1189 818L1207 797.5L1223 810C1212 812 1205 822 1204 834Z" fill="#f0b000"/>
<path d="M1207 797.5L1223 810L1218 811L1204 800Z" fill="#a87c00"/>
<path d="M1157 804.5C1168 810 1173 820 1172 830C1170 848 1148 866 1128 868.5C1119 869 1113 862 1112 856C1128 858 1146 851 1156 838C1163 828 1157 815 1157 804.5Z" fill="url(#cr)"/>
<path d="M1126 812L1134 807L1142 815L1132 818Z" fill="#d9a000"/>
<path d="M1128 846C1133 843 1140 842 1146 838L1143 848L1132 852Z" fill="#c89600"/>
<path d="M1082 724C1090 716 1108 714 1128 719C1142 723 1150 730 1151 737" fill="none" stroke="#22e022" stroke-width="1"/>
<path d="M1163 806C1170 822 1162 842 1146 853C1134 861 1120 864 1113 861" fill="none" stroke="#22e022" stroke-width="1"/>
<rect x="1088.5" y="722.5" width="55" height="23" fill="#fff" stroke="#000"/><rect x="1089" y="723" width="54" height="3" fill="#18c018"/>
<circle cx="1097" cy="736" r="5.5" fill="none" stroke="#5a80d0" stroke-width="1.6"/>
<text x="1110" y="741" font-family="Liberation Mono,Noto Sans CJK SC,monospace" font-size="13" fill="#000">圆</text><text x="1128" y="741" font-family="Liberation Mono,monospace" font-size="13" fill="#000">1</text>
<rect x="1107.5" y="817.5" width="56" height="23" fill="#fff" stroke="#000"/><rect x="1108" y="818" width="55" height="3" fill="#18c018"/>
<circle cx="1116" cy="831" r="5.5" fill="none" stroke="#5a80d0" stroke-width="1.6"/>
<text x="1129" y="836" font-family="Liberation Mono,Noto Sans CJK SC,monospace" font-size="13" fill="#000">圆</text><text x="1147" y="836" font-family="Liberation Mono,monospace" font-size="13" fill="#000">2</text>
<line x1="1084" y1="799" x2="1105" y2="676" stroke="#f0286e" stroke-width="1.2"/>
<line x1="1084" y1="799" x2="1105" y2="676" stroke="#2a5ae0" stroke-width=".9" stroke-dasharray="1.5 1.5"/>
<line x1="1084" y1="799" x2="1004" y2="729" stroke="#f0286e" stroke-width="1.2"/>
<line x1="1084" y1="799" x2="1004" y2="729" stroke="#2a5ae0" stroke-width=".9" stroke-dasharray="1.5 1.5"/>
<line x1="1084" y1="799" x2="1204" y2="779" stroke="#f0286e" stroke-width="1.2"/>
<line x1="1084" y1="799" x2="1204" y2="779" stroke="#2a5ae0" stroke-width=".9" stroke-dasharray="1.5 1.5"/>
<path d="M1107.2 671.5L1107.8 689.5L1101 691.6Z" fill="#f0286e"/>
<path d="M1004.5 728.5L1019 735.5L1013 741Z" fill="#f0286e"/>
<path d="M1205 778L1186 777L1187 785Z" fill="#8a1a40"/>
<path d="M1098 716L1098 730L1094 730Z" fill="#2a5ae0"/><path d="M1034 755L1043 758L1040 762Z" fill="#2a5ae0"/><path d="M1160 785L1152 784L1152 790Z" fill="#1a3a90"/>
<text x="1105.5" y="668" font-family="Liberation Sans,sans-serif" font-size="17" fill="#f0286e" text-anchor="middle">Z</text>
<text x="1098" y="710" font-family="Liberation Sans,sans-serif" font-size="17" fill="#2a5ae0" text-anchor="middle">Z</text>
<text x="1003" y="727" font-family="Liberation Sans,sans-serif" font-size="17" fill="#f0286e" text-anchor="middle">Y</text>
<text x="1029" y="750" font-family="Liberation Sans,sans-serif" font-size="17" fill="#2a5ae0" text-anchor="middle">Y</text>
<text x="1204" y="776" font-family="Liberation Sans,sans-serif" font-size="17" fill="#f0286e" text-anchor="middle">X</text>
<text x="1164" y="783" font-family="Liberation Sans,sans-serif" font-size="17" fill="#2a5ae0" text-anchor="middle">X</text>
</svg>
<div class="a" style="left:1916px;top:167px;width:3px;height:852px;background:#000"></div>
<div class="a" style="left:0px;top:1039px;width:1916px;height:1px;background:#fafafa"></div>
<div class="a" style="left:0px;top:1040px;width:1919px;height:3px;background:#000"></div>
<div class="a" style="left:394px;top:1041px;width:48px;height:2px;background:#343536"></div>
<div class="a" style="left:63px;top:65px;width:49px;height:24px;background:#f0f0f0;border:1px solid #7a7a7a;box-sizing:border-box"></div>
<div class="t" style="left:67px;top:69px;color:#7090c0;font-size:13px">0</div>
<div class="t" style="left:14px;top:69px;">测点数</div>
<div class="t" style="left:463px;top:69px;">功能</div>
<div class="a" style="left:491px;top:66px;width:78px;height:22px;background:#fff"></div>
<div class="a" style="left:556px;top:67px;width:12px;height:20px;background:linear-gradient(#f4f5fa,#cdd2e3)"></div>
<div class="t" style="left:494px;top:69px;">无</div>
<div class="a" style="left:571px;top:66px;width:78px;height:22px;background:#fff"></div>
<div class="a" style="left:636px;top:67px;width:12px;height:20px;background:linear-gradient(#f4f5fa,#cdd2e3)"></div>
<div class="a" style="left:235px;top:174px;width:63px;height:22px;background:#fff"></div>
<div class="a" style="left:285px;top:175px;width:12px;height:20px;background:linear-gradient(#f4f5fa,#cdd2e3)"></div>
<div class="t" style="left:237px;top:177px;">AUTO</div>
<div class="a" style="left:720px;top:178px;width:38px;height:23px;background:#f0f0f0;border:1px solid #7a7a7a;box-sizing:border-box"></div>
<div class="t" style="left:724px;top:181px;color:#808080">1</div>
<div class="a" style="left:1120px;top:178px;width:68px;height:22px;background:#fff"></div>
<div class="a" style="left:1175px;top:179px;width:12px;height:20px;background:linear-gradient(#f4f5fa,#cdd2e3)"></div>
<div class="t" style="left:1123px;top:181px;">VIEW</div>
<svg style="left:0;top:0" width="1919" height="210" viewBox="0 0 1919 210">
<defs>
<radialGradient id="rsR" cx=".4" cy=".3" r=".7"><stop offset="0" stop-color="#fff"/><stop offset=".25" stop-color="#ff8a8a"/><stop offset="1" stop-color="#f01010"/></radialGradient>
<radialGradient id="rsB" cx=".4" cy=".3" r=".7"><stop offset="0" stop-color="#fff"/><stop offset=".25" stop-color="#9cbcf0"/><stop offset="1" stop-color="#3566c0"/></radialGradient>
<radialGradient id="rsY" cx=".4" cy=".35" r=".7"><stop offset="0" stop-color="#fff"/><stop offset=".2" stop-color="#e8e820"/><stop offset="1" stop-color="#8c8c00"/></radialGradient>
<radialGradient id="rsT" cx=".4" cy=".3" r=".7"><stop offset="0" stop-color="#e8fffa"/><stop offset=".3" stop-color="#3cb8a8"/><stop offset="1" stop-color="#0c6a66"/></radialGradient>
<radialGradient id="rsO" cx=".4" cy=".3" r=".7"><stop offset="0" stop-color="#ffd0a0"/><stop offset=".4" stop-color="#e85018"/><stop offset="1" stop-color="#b02808"/></radialGradient>
<radialGradient id="rsD" cx=".4" cy=".3" r=".7"><stop offset="0" stop-color="#f0c0c0"/><stop offset=".4" stop-color="#c04040"/><stop offset="1" stop-color="#801818"/></radialGradient>
<radialGradient id="rsG" cx=".4" cy=".3" r=".7"><stop offset="0" stop-color="#e8ecf4"/><stop offset="1" stop-color="#9098b0"/></radialGradient>
<linearGradient id="cyR" x1="0" x2="1"><stop offset="0" stop-color="#f01818"/><stop offset=".45" stop-color="#ff7070"/><stop offset=".55" stop-color="#fff0f0"/><stop offset=".65" stop-color="#ff5050"/><stop offset="1" stop-color="#e80808"/></linearGradient>
<linearGradient id="cyB" x1="0" x2="1"><stop offset="0" stop-color="#3c6cc4"/><stop offset=".45" stop-color="#8cb0ec"/><stop offset=".55" stop-color="#f0f6ff"/><stop offset=".65" stop-color="#7098e0"/><stop offset="1" stop-color="#3060b8"/></linearGradient>
<linearGradient id="cyY" x1="0" x2="1"><stop offset="0" stop-color="#a8a800"/><stop offset=".4" stop-color="#e8e800"/><stop offset=".5" stop-color="#ffffd0"/><stop offset=".6" stop-color="#e0e000"/><stop offset="1" stop-color="#8c8c00"/></linearGradient>
<linearGradient id="pgR" x1="0" y1="0" x2=".6" y2="1"><stop offset="0" stop-color="#ff5a5a"/><stop offset=".5" stop-color="#fff"/><stop offset="1" stop-color="#ff8080"/></linearGradient>
<linearGradient id="pgB" x1="0" y1="0" x2=".6" y2="1"><stop offset="0" stop-color="#6a94e0"/><stop offset=".5" stop-color="#fff"/><stop offset="1" stop-color="#88aaf0"/></linearGradient>
<linearGradient id="pgY" x1="0" y1="0" x2=".6" y2="1"><stop offset="0" stop-color="#e0e000"/><stop offset=".5" stop-color="#ffffe0"/><stop offset="1" stop-color="#d8d800"/></linearGradient>
<linearGradient id="sfB" x1="0" y1="0" x2="0" y2="1"><stop offset="0" stop-color="#2a62d8"/><stop offset=".5" stop-color="#a8c8ff"/><stop offset="1" stop-color="#2a62d8"/></linearGradient>
<linearGradient id="sfY" x1="0" y1="0" x2="0" y2="1"><stop offset="0" stop-color="#9c9c00"/><stop offset=".5" stop-color="#e6e640"/><stop offset="1" stop-color="#8c8c00"/></linearGradient>
<linearGradient id="tealG" x1="0" y1="0" x2="0" y2="1"><stop offset="0" stop-color="#2c7c78"/><stop offset=".5" stop-color="#70b8b0"/><stop offset="1" stop-color="#2c7c78"/></linearGradient>
<linearGradient id="magG" x1="0" y1="0" x2="0" y2="1"><stop offset="0" stop-color="#c040b0"/><stop offset="1" stop-color="#8a1080"/></linearGradient>
<linearGradient id="selG" x1="0" y1="0" x2="0" y2="1"><stop offset="0" stop-color="#eaf6fb"/><stop offset=".5" stop-color="#bfe0f0"/><stop offset="1" stop-color="#9acbe6"/></linearGradient>
<linearGradient id="glass" x1="0" y1="0" x2="1" y2="1"><stop offset="0" stop-color="#e8f2ff"/><stop offset="1" stop-color="#88aee0"/></linearGradient>
<linearGradient id="purG" x1="0" y1="0" x2="0" y2="1"><stop offset="0" stop-color="#b090f0"/><stop offset="1" stop-color="#6a3cc0"/></linearGradient>
<linearGradient id="docG" x1="0" y1="0" x2="1" y2="1"><stop offset="0" stop-color="#f0f6ff"/><stop offset="1" stop-color="#a8c4f0"/></linearGradient>
<linearGradient id="tealB" x1="0" y1="0" x2="1" y2="1"><stop offset="0" stop-color="#c8f0ec"/><stop offset="1" stop-color="#58b8b0"/></linearGradient>
<linearGradient id="ylG" x1="0" y1="0" x2="0" y2="1"><stop offset="0" stop-color="#ffe060"/><stop offset="1" stop-color="#f0a800"/></linearGradient>
<linearGradient id="grG" x1="0" y1="0" x2="0" y2="1"><stop offset="0" stop-color="#a0a8c0"/><stop offset="1" stop-color="#8088a4"/></linearGradient>
</defs>
<path d="M7 28V52" stroke="#fff" stroke-width="2" stroke-dasharray="2 2" transform="translate(1,1)"/><path d="M7 28V52" stroke="#8a90ac" stroke-width="2" stroke-dasharray="2 2"/>
<path d="M7 65V89" stroke="#fff" stroke-width="2" stroke-dasharray="2 2" transform="translate(1,1)"/><path d="M7 65V89" stroke="#8a90ac" stroke-width="2" stroke-dasharray="2 2"/>
<g transform="translate(124,77)"><g transform="translate(0,0)"><path d="M-8 0L-2.800 -9.500L8 -9.700L1 0Z" fill="#f0b4bc" stroke="#b85868" stroke-width=".7"/><path d="M-5.500 -2.500L-2 -8.500L6 -8.600L2.500 -2.600Z" fill="#f8d0d4" opacity=".8"/><path d="M-8 0L1 0L1 2L-8 2Z" fill="#c86878" stroke="#a84858" stroke-width=".5"/><path d="M1 0L8 -9.700L8 -7.700L1 2Z" fill="#d88090" stroke="#a84858" stroke-width=".5"/></g><circle cx="-0.2" cy="6.8" r="2.4" fill="url(#rsO)"/></g>
<g transform="translate(151,77)"><g transform="translate(-0.7,0)"><path d="M-8 0L-2.800 -9.500L8 -9.700L1 0Z" fill="#f0b4bc" stroke="#b85868" stroke-width=".7"/><path d="M-5.500 -2.500L-2 -8.500L6 -8.600L2.500 -2.600Z" fill="#f8d0d4" opacity=".8"/><path d="M-8 0L1 0L1 2L-8 2Z" fill="#c86878" stroke="#a84858" stroke-width=".5"/><path d="M1 0L8 -9.700L8 -7.700L1 2Z" fill="#d88090" stroke="#a84858" stroke-width=".5"/></g><circle cx="-8.4" cy="4.3" r="2.1" fill="url(#rsO)"/><circle cx="-3.8" cy="8.7" r="2.1" fill="url(#rsO)"/><circle cx="-2.5" cy="3" r="2.1" fill="url(#rsO)"/><circle cx="2.2" cy="6.3" r="2.1" fill="url(#rsO)"/><circle cx="3" cy="0.9" r="2.1" fill="url(#rsO)"/><circle cx="8.5" cy="2.4" r="2.1" fill="url(#rsO)"/><circle cx="8.5" cy="8.5" r="2.1" fill="url(#rsO)"/><circle cx="7.6" cy="-3.5" r="2.1" fill="url(#rsO)"/></g>
<g transform="translate(171.5,88)"><path d="M-3 -2.500H3" stroke="#000" stroke-width="1.2"/><path d="M-3 -.5H3L0 2.800Z" fill="#000"/></g>
<path d="M184 65V89" stroke="#fff" stroke-width="2" stroke-dasharray="2 2" transform="translate(1,1)"/><path d="M184 65V89" stroke="#8a90ac" stroke-width="2" stroke-dasharray="2 2"/>
<g transform="translate(202,77)"><path d="M-11 11C-6 8 -2 2 0 -3C-4 -7 -8 -6 -10 -4M0 -3C3 -8 8 -6 13 -9M0 -3C2 2 1 5 -3 8M1 -9L5 -6" fill="none" stroke="#8e98b4" stroke-width="1.8" stroke-linecap="round"/></g>
<g transform="translate(235,77)"><path d="M-12 4L0 -2L12 4L0 11Z" fill="#d8dce6" stroke="#a8aec0" stroke-width=".8"/><path d="M-12 4V7L0 14L12 7V4L0 11Z" fill="#b8bece"/><rect x="-2.2" y="-13" width="4.4" height="15" rx="2" fill="#c4c9d8" stroke="#9aa0b4" stroke-width=".7"/><ellipse cy="3" rx="4" ry="2" fill="#aab0c4"/></g>
<g transform="translate(267,77)"><rect x="-9" y="-9" width="18" height="18" rx="1.5" fill="url(#grG)"/><path d="M-6 0H5M1 -5L6 0L1 5" fill="none" stroke="#fff" stroke-width="2.4"/></g>
<g transform="translate(300,77)"><path d="M-9 2L3 -4L10 0L-2 6Z" fill="#c8d8f8" stroke="#4a74d0" stroke-width="1"/><path d="M-9 2V8L-2 12V6Z" fill="#88a8e8" stroke="#4a74d0" stroke-width="1"/><path d="M-2 6L10 0V6L-2 12Z" fill="#e8eefc" stroke="#4a74d0" stroke-width="1"/><path d="M-4 -8V2" stroke="#18c018" stroke-width="1.2" stroke-dasharray="1.5 1"/><text x="-10" y="-9" font-size="7" font-weight="bold" fill="#800000" font-family="Liberation Mono,monospace">XYZ</text></g>
<g transform="translate(663,77)"><path d="M-4 -9L6 -12L13 -8L3 -4Z" fill="#f0b0b0" stroke="#e06060" stroke-width="1"/><path d="M0 0L8 -3L13 0L5 4Z" fill="#90e890" stroke="#30b030" stroke-width=".8"/><path d="M0 0V6L5 10V4Z" fill="#40c040"/><path d="M5 4L13 0V6L5 10Z" fill="#a0f0a0" stroke="#30b030" stroke-width=".6"/><rect x="-11" y="1" width="9" height="9" rx="1" fill="#103c8c"/><path d="M-9.5 1V-2A3 3 0 0 1 -3.5 -2V1" fill="none" stroke="#103c8c" stroke-width="2"/><rect x="-7.2" y="4" width="1.6" height="3" fill="#fff"/></g>
<g transform="translate(683.5,88)"><path d="M-3 -2.500H3" stroke="#000" stroke-width="1.2"/><path d="M-3 -.5H3L0 2.800Z" fill="#000"/></g>
<g transform="translate(562,77)"><path d="M-3 -1.500H3L0 1.800Z" fill="#000"/></g>
<g transform="translate(642,77)"><path d="M-3 -1.500H3L0 1.800Z" fill="#000"/></g>
<path d="M705 65V89" stroke="#fff" stroke-width="2" stroke-dasharray="2 2" transform="translate(1,1)"/><path d="M705 65V89" stroke="#8a90ac" stroke-width="2" stroke-dasharray="2 2"/>
<rect x="739.5" y="61.5" width="30" height="31" fill="url(#selG)" stroke="#2f8fc4"/>
<rect x="947.5" y="61.5" width="30" height="31" fill="url(#selG)" stroke="#2f8fc4"/>
<g transform="translate(724,77)"><path d="M-5 3L5 -4L9 1L0 9Z" fill="#b070e0" stroke="#8040c0" stroke-width=".8"/><path d="M5 -4L11 -11" stroke="#8838d0" stroke-width="2.6" stroke-linecap="round"/><path d="M-7 2L7 -6L9 -3L-5 5Z" fill="#c898f0"/><circle cx="-10" cy="6" r="2.2" fill="url(#rsO)"/><circle cx="-6" cy="10" r="2.2" fill="url(#rsO)"/><circle cx="0" cy="10" r="2.2" fill="url(#rsO)"/><circle cx="6" cy="7" r="2.2" fill="url(#rsO)"/><circle cx="11" cy="2" r="2.2" fill="url(#rsO)"/></g>
<g transform="translate(754.5,77)"><path d="M0 -11V11M-11 0H11" stroke="#2e7f7a" stroke-width="2.6"/><path d="M-4 -8L0 -13L4 -8ZM-4 8L0 13L4 8ZM-8 -4L-13 0L-8 4ZM8 -4L13 0L8 4Z" fill="#2e7f7a"/></g>
<g transform="translate(785.5,77)"><g transform="translate(4,-3) scale(.9)"><path d="M2 2L8 13" stroke="#5a5a5a" stroke-width="3.4" stroke-linecap="round"/><path d="M2 2L8 13" stroke="#c8c8c8" stroke-width="1.4" stroke-linecap="round"/><circle cx="-1" cy="-4" r="7" fill="url(#glass)" stroke="#8a9cb8" stroke-width="1.6"/><path d="M-5 -6A5 5 0 0 1 1 -9" fill="none" stroke="#fff" stroke-width="1.2" opacity=".8"/></g><rect x="-11" y="3" width="8" height="8" fill="none" stroke="#2e7f7a" stroke-width="1.4"/></g>
<g transform="translate(817,77)"><g transform="translate(4,-3) scale(.9)"><path d="M2 2L8 13" stroke="#5a5a5a" stroke-width="3.4" stroke-linecap="round"/><path d="M2 2L8 13" stroke="#c8c8c8" stroke-width="1.4" stroke-linecap="round"/><circle cx="-1" cy="-4" r="7" fill="url(#glass)" stroke="#8a9cb8" stroke-width="1.6"/><path d="M-5 -6A5 5 0 0 1 1 -9" fill="none" stroke="#fff" stroke-width="1.2" opacity=".8"/></g><path d="M-11 3H-3M-7 -1V7M-11 11H-3" stroke="#2e7f7a" stroke-width="1.4"/></g>
<g transform="translate(846,77)"><path d="M-11 3L2 -4L9 0L-4 7Z" fill="#a8ece4" stroke="#30a098" stroke-width="1"/><path d="M-11 3V8L-4 12V7Z" fill="#60c8c0" stroke="#30a098" stroke-width="1"/><path d="M-4 7L9 0V5L-4 12Z" fill="#d0f8f4" stroke="#30a098" stroke-width="1"/><path d="M11 1C13 -6 9 -10 4 -10" fill="none" stroke="#38b828" stroke-width="2.6"/><path d="M5 -14L0 -9.5L6 -6Z" fill="#38b828"/></g>
<g transform="translate(890,77)"><g transform="translate(4,-3) scale(.9)"><path d="M2 2L8 13" stroke="#5a5a5a" stroke-width="3.4" stroke-linecap="round"/><path d="M2 2L8 13" stroke="#c8c8c8" stroke-width="1.4" stroke-linecap="round"/><circle cx="-1" cy="-4" r="7" fill="url(#glass)" stroke="#8a9cb8" stroke-width="1.6"/><path d="M-5 -6A5 5 0 0 1 1 -9" fill="none" stroke="#fff" stroke-width="1.2" opacity=".8"/></g><path d="M-7 3V13M-12 8H-2" stroke="#2e7f7a" stroke-width="1.3"/><path d="M-9 5L-7 2L-5 5ZM-9 11L-7 14L-5 11ZM-10 6L-13 8L-10 10ZM-4 6L-1 8L-4 10Z" fill="#2e7f7a"/></g>
<g transform="translate(920.5,77)"><rect x="-10" y="-5" width="14" height="14" fill="url(#tealB)" stroke="#2e7f7a" stroke-width="1.2"/><path d="M-10 -5L-4 -11H10L4 -5M10 -11V3L4 9" fill="none" stroke="#2e7f7a" stroke-width="1.2"/></g>
<g transform="translate(962.5,77)"><circle r="10" fill="url(#rsT)"/></g>
<g transform="translate(1004,77)"><path d="M-12 -10H4L7 6H-9Z" fill="url(#pgY)" stroke="#a0a000" stroke-width="1.4"/><path d="M-9 6H7V8H-8Z" fill="#888800"/><g transform="translate(3,-3) scale(1)"><path d="M0 0L0 12L3 9.5L5.5 15L7.5 14L5 8.8L9 8.8Z" fill="#c8f0ec" stroke="#2c7c78" stroke-width="1.1" stroke-linejoin="round"/></g></g>
<g transform="translate(1036,77)"><path d="M-12 -2L11 -9L11 -6.5L-12 1Z" fill="#3c8c86"/><g transform="translate(0,-4) scale(1)"><path d="M0 0L0 12L3 9.5L5.5 15L7.5 14L5 8.8L9 8.8Z" fill="#c8f0ec" stroke="#2c7c78" stroke-width="1.1" stroke-linejoin="round"/></g></g>
<g transform="translate(1066,77)"><path d="M-10 -12H3V2L-10 10Z" fill="#90d8d0" stroke="#3c8c86" stroke-width=".8"/><circle cx="-3" cy="-8" r="2.6" fill="url(#rsR)"/><g transform="translate(-1,-5) scale(1.2)"><path d="M0 0L0 12L3 9.5L5.5 15L7.5 14L5 8.8L9 8.8Z" fill="#e0c0f0" stroke="#b060d0" stroke-width="1.1" stroke-linejoin="round"/></g></g>
<g transform="translate(1108,77)"><path d="M-7 -10L-4 -13L-1 -10L-4 -7Z" fill="#e060d0"/><path d="M0 -10L3 -13L6 -10L3 -7Z" fill="#3080e0"/><path d="M-11 -4L-8 -7L-5 -4L-8 -1Z" fill="#f0c030"/><g transform="translate(-4,-7) scale(1.15)"><path d="M0 0L0 12L3 9.5L5.5 15L7.5 14L5 8.8L9 8.8Z" fill="#fff" stroke="#222" stroke-width="1.1" stroke-linejoin="round"/></g></g>
<g transform="translate(1140,77)"><path d="M-12 9L-5 3H11L5 9Z" fill="#f0e8ff" stroke="#9050d0" stroke-width="1.2"/><path d="M-10 6V-7L-3 -12H9V3M-3 -12V3" fill="none" stroke="#e04818" stroke-width="1.2"/><path d="M-10 -7L-3 -12H9" fill="none" stroke="#20c020" stroke-width="1.6"/><circle cx="-10" cy="6" r="2.5" fill="url(#rsO)"/><circle cx="-3" cy="3" r="2.5" fill="url(#rsO)"/><circle cx="9" cy="3" r="2.5" fill="url(#rsO)"/></g>
<g transform="translate(1171,77)"><rect x="-11" y="-8" width="22" height="16" rx="1" fill="url(#purG)" stroke="#6030b0" stroke-width="1"/><path d="M-8 -4H2M-8 -1H8M-8 2H8M-8 5H8" stroke="#efe6ff" stroke-width="1.2"/></g>
<g transform="translate(1202,77)"><path d="M-11 -6H-8L-6 -8H-1L1 -6H11V8H-11Z" fill="url(#purG)" stroke="#6030b0" stroke-width=".8"/><rect x="-11" y="-6" width="7" height="14" fill="#8a5cd8"/><circle cx="3" cy="2" r="5.5" fill="#d8c8f8" stroke="#6030b0" stroke-width=".8"/><circle cx="3" cy="2" r="3" fill="#180830"/></g>
<g transform="translate(1232.5,77)"><path d="M-10 -1C-10 -8 -4 -11 1 -8" fill="none" stroke="#8050d8" stroke-width="3"/><path d="M0 -12L5 -6L-3 -5Z" fill="#8050d8"/><path d="M10 1C10 8 4 11 -1 8" fill="none" stroke="#8050d8" stroke-width="3"/><path d="M0 12L-5 6L3 5Z" fill="#8050d8"/><path d="M-6 0H6M0 -6V6M-4 -4L4 4M-4 4L4 -4" stroke="#e8e020" stroke-width=".9"/><path d="M-4 4L4 -4" stroke="#30c030" stroke-width=".9"/><circle cx="0" cy="0" r="2.4" fill="url(#rsO)"/></g>
<g transform="translate(1263,77)"><g transform="translate(-4,-1)"><g transform="scale(1)"><path d="M-6.500 -6.500H6.500L7 -1C6.500 3.500 2 5.500 -1 5L-3.500 4.500L-6.500 -1Z" fill="#fff" opacity=".55" stroke="#fff" stroke-width="1.200" stroke-opacity=".5"/><rect x="-7" y="-9.500" width="14" height="3.500" fill="#a4a4a4"/><rect x="-7" y="-7.500" width="14" height="1.500" fill="#6a6a6a"/><path d="M-6 -6H6L6.500 -1C6 3 2 5 -1 4.500L-3 4L-5.500 -1Z" fill="#1c1c1c"/><circle cx="1.500" cy="-1.500" r="2.600" fill="#505050"/><circle cx="-2" cy="0" r="1.600" fill="#3a3a3a"/><path d="M-2 4L-5.500 9.200" stroke="#fff" stroke-width="2.400" opacity=".5"/><path d="M-2 4L-5.500 9.200" stroke="#2a2a2a" stroke-width="1.300"/><path d="M-3 3L0 5L-2.500 6.500Z" fill="#888"/><circle cx="-5.700" cy="9.500" r=".85" fill="#e01010"/></g></g><g transform="translate(6,8)"><ellipse rx="6.5" ry="4" fill="#fff" stroke="#108018" stroke-width="2"/><circle r="2" fill="#108018"/></g></g>
<g transform="translate(867.5,77)"><path d="M-3 -1.500H3L0 1.800Z" fill="#000"/></g>
<g transform="translate(940.5,77)"><path d="M-3 -1.500H3L0 1.800Z" fill="#000"/></g>
<g transform="translate(982.5,77)"><path d="M-3 -1.500H3L0 1.800Z" fill="#000"/></g>
<g transform="translate(1086,77)"><path d="M-3 -1.500H3L0 1.800Z" fill="#000"/></g>
<g transform="translate(1284,77)"><path d="M-3 -1.500H3L0 1.800Z" fill="#000"/></g>
<g transform="translate(1297,88)"><path d="M-3 -2.500H3" stroke="#000" stroke-width="1.2"/><path d="M-3 -.5H3L0 2.800Z" fill="#000"/></g>
<path d="M7 101V125" stroke="#fff" stroke-width="2" stroke-dasharray="2 2" transform="translate(1,1)"/><path d="M7 101V125" stroke="#8a90ac" stroke-width="2" stroke-dasharray="2 2"/>
<g transform="translate(25.5,113)"><circle r="2.4" fill="url(#rsO)"/></g>
<g transform="translate(57.6,113)"><path d="M-10 10L11 -10" stroke="#ff1c1c" stroke-width="2.800"/><path d="M-10 10L11 -10" stroke="#8a0000" stroke-width=".9"/></g>
<g transform="translate(89.7,113)"><circle r="9.3" fill="none" stroke="#ff1c1c" stroke-width="3.2"/></g>
<g transform="translate(121.80000000000001,113)"><path d="M-11 4C-6 -7 8 -8 11 8" fill="none" stroke="#ff1c1c" stroke-width="3" stroke-linecap="round"/></g>
<g transform="translate(153.9,113)"><ellipse rx="11" ry="6.6" fill="none" stroke="#ff1c1c" stroke-width="3"/></g>
<g transform="translate(186.0,113)"><path d="M-11 -8.5L7 -8.5L11 8L-7 8Z" fill="url(#pgR)" stroke="#ff1c1c" stroke-width="1.6" stroke-linejoin="round"/><path d="M-7 8L11 8L11 9.5L-6.5 9.5Z" fill="#ff1c1c"/></g>
<g transform="translate(218.10000000000002,113)"><rect x="-10" y="-7" width="20" height="14" fill="none" stroke="#ff1c1c" stroke-width="3.2"/></g>
<g transform="translate(250.20000000000002,113)"><rect x="-11" y="-7" width="22" height="14" rx="7" fill="none" stroke="#ff1c1c" stroke-width="3"/><path d="M-4 -6V6M4 -6V6" stroke="#ff1c1c" stroke-width="1" stroke-dasharray="2 1.5"/></g>
<g transform="translate(282.3,113)"><path d="M-8.5 -8V8A8.5 3.2 0 0 0 8.5 8V-8Z" fill="url(#cyR)"/><ellipse cy="-8" rx="8.5" ry="3.2" fill="#ff6060" stroke="#ff1c1c" stroke-width=".6"/></g>
<g transform="translate(314.40000000000003,113)"><circle r="10" fill="url(#rsR)"/></g>
<g transform="translate(475,113)"><path d="M-6 9V-8L9 9Z" fill="none" stroke="#ff1c1c" stroke-width="2.6" stroke-linejoin="round"/><path d="M-3 6V0L3 6Z" fill="none" stroke="#ff1c1c" stroke-width="1.2"/><rect x="-11" y="-10" width="3" height="20" fill="#f0c040" stroke="#c09000" stroke-width=".6"/></g>
<g transform="translate(506,113)"><text x="-5" y="8" font-size="21" font-weight="bold" fill="#ff0808" font-family="Liberation Sans,sans-serif">?</text></g>
<g transform="translate(537.5,113)"><g transform="translate(3,0)"><path d="M-7.0 -9.0H3.0L7.0 -5.0V9.0H-7.0Z" fill="#ffd0d0" stroke="#e06060" stroke-width="1"/><path d="M3.0 -9.0V-5.0H7.0" fill="#fff" stroke="#e06060" stroke-width=".8"/></g><rect x="-12" y="-4" width="17" height="9" fill="#f8c020"/><text x="-11.5" y="3.5" font-size="9" font-weight="bold" fill="#402000" font-family="Liberation Sans,sans-serif">path</text><path d="M4 10L10 3L12 5L6 11Z" fill="#e0a020" stroke="#604000" stroke-width=".6"/><circle cx="11" cy="3" r="1.8" fill="#e03030"/></g>
<g transform="translate(561.5,124)"><path d="M-3 -2.500H3" stroke="#000" stroke-width="1.2"/><path d="M-3 -.5H3L0 2.800Z" fill="#000"/></g>
<path d="M574 101V125" stroke="#fff" stroke-width="2" stroke-dasharray="2 2" transform="translate(1,1)"/><path d="M574 101V125" stroke="#8a90ac" stroke-width="2" stroke-dasharray="2 2"/>
<g transform="translate(591.5,113)"><circle r="2.4" fill="url(#rsB)"/></g>
<g transform="translate(623.62,113)"><path d="M-10 10L11 -10" stroke="#4470c4" stroke-width="2.800"/><path d="M-10 10L11 -10" stroke="#1c3c90" stroke-width=".9"/></g>
<g transform="translate(655.74,113)"><circle r="9.3" fill="none" stroke="#4470c4" stroke-width="3.2"/></g>
<g transform="translate(687.86,113)"><path d="M-11 4C-6 -7 8 -8 11 8" fill="none" stroke="#4470c4" stroke-width="3" stroke-linecap="round"/></g>
<g transform="translate(719.98,113)"><ellipse rx="11" ry="6.6" fill="none" stroke="#4470c4" stroke-width="3"/></g>
<g transform="translate(752.1,113)"><path d="M-11 -8.5L7 -8.5L11 8L-7 8Z" fill="url(#pgB)" stroke="#4470c4" stroke-width="1.6" stroke-linejoin="round"/><path d="M-7 8L11 8L11 9.5L-6.5 9.5Z" fill="#4470c4"/></g>
<g transform="translate(784.22,113)"><rect x="-10" y="-7" width="20" height="14" fill="none" stroke="#4470c4" stroke-width="3.2"/></g>
<g transform="translate(816.3399999999999,113)"><rect x="-11" y="-7" width="22" height="14" rx="7" fill="none" stroke="#4470c4" stroke-width="3"/><path d="M-4 -6V6M4 -6V6" stroke="#4470c4" stroke-width="1" stroke-dasharray="2 1.5"/></g>
<g transform="translate(848.46,113)"><path d="M-8.5 -8V8A8.5 3.2 0 0 0 8.5 8V-8Z" fill="url(#cyB)"/><ellipse cy="-8" rx="8.5" ry="3.2" fill="#7ca0e4" stroke="#4470c4" stroke-width=".6"/></g>
<g transform="translate(880.5799999999999,113)"><circle r="10" fill="url(#rsB)"/></g>
<g transform="translate(912.7,113)"><path d="M0 -12L8.5 8A8.5 3 0 0 1 -8.5 8Z" fill="url(#cyB)"/></g>
<g transform="translate(944.8199999999999,113)"><ellipse rx="9" ry="7.5" fill="none" stroke="url(#rsB)" stroke-width="5.2"/><ellipse rx="9" ry="7.5" fill="none" stroke="#1c3c90" stroke-width="5.2" opacity=".15"/></g>
<g transform="translate(976.9399999999999,113)"><rect x="-11" y="0" width="10" height="10" fill="url(#docG)" stroke="#a8c0f0" stroke-width=".6"/><path d="M-8 -11H8V3" fill="none" stroke="#000" stroke-width="1" stroke-dasharray="1.2 1.2"/><path d="M-8 3V-9" stroke="#0a6a18" stroke-width="1.6"/><path d="M-11 -8L-8 -13L-5 -8Z" fill="#0a6a18"/><path d="M-1 5H8" stroke="#0a6a18" stroke-width="1.6"/><path d="M7 2L12 5L7 8Z" fill="#0a6a18"/><circle cx="-1" cy="5" r="1.8" fill="url(#rsR)"/></g>
<g transform="translate(1009.06,113)"><path d="M-12 6L2 -10L12 -2L0 9Z" fill="#3078e0"/><path d="M-12 6L0 9L12 -2L10 2L0 11Z" fill="#8030c0"/><path d="M-7 -8L-3 -4M4 -2L9 -7M-8 9L-4 5" stroke="#000" stroke-width="1.6"/><path d="M-9 -10L-5 -9L-8 -6ZM11 -9L10 -5L7 -8ZM-10 11L-9 7L-6 10Z" fill="#000"/><circle cx="-3" cy="-4" r="1.7" fill="url(#rsR)"/><circle cx="4" cy="-2" r="1.7" fill="url(#rsR)"/><circle cx="-4" cy="5" r="1.7" fill="url(#rsR)"/></g>
<g transform="translate(1041.1799999999998,113)"><path d="M-12 8L0 -6L12 2L2 11Z" fill="#3078e0"/><path d="M-12 8L0 -2L2 11Z" fill="#7030c0"/><path d="M-10 5L-2 -9L8 -1" fill="none" stroke="#f0d020" stroke-width="1"/><circle cx="-2" cy="-9" r="1.7" fill="url(#rsR)"/><circle cx="-10" cy="5" r="1.4" fill="url(#rsY)"/><circle cx="3" cy="-5" r="1.4" fill="url(#rsY)"/><circle cx="8" cy="-1" r="1.4" fill="url(#rsY)"/></g>
<g transform="translate(1073.3,113)"><path d="M-8 -6V7H8V-6" fill="none" stroke="#4470c4" stroke-width="1.8"/></g>
<g transform="translate(1105.42,113)"><path d="M-4 -11L-10 -4V4L-4 11" fill="none" stroke="#4470c4" stroke-width="2.6"/><path d="M-4 -11H4L10 -4V4L4 11H-4" fill="none" stroke="#4470c4" stroke-width="2.6" stroke-dasharray="3 2.5"/></g>
<g transform="translate(1137.54,113)"><path d="M-11 -10L0 9L11 -10V11H-11Z" fill="url(#sfB)" opacity=".85"/><path d="M-11 -10L0 9L11 -10V11H-11Z" fill="none" stroke="#4470c4" stroke-width="1"/><circle cy="-4" r="4.2" fill="#f8f8ff" stroke="#888" stroke-width=".6"/><circle cx="0" cy="-4" r="1.8" fill="url(#rsR)"/></g>
<g transform="translate(1160.5,124)"><path d="M-3 -2.500H3" stroke="#000" stroke-width="1.2"/><path d="M-3 -.5H3L0 2.800Z" fill="#000"/></g>
<path d="M1173.5 101V125" stroke="#fff" stroke-width="2" stroke-dasharray="2 2" transform="translate(1,1)"/><path d="M1173.5 101V125" stroke="#8a90ac" stroke-width="2" stroke-dasharray="2 2"/>
<g transform="translate(1191.5,113)"><circle r="2.4" fill="url(#rsY)"/></g>
<g transform="translate(1223.55,113)"><path d="M-10 10L11 -10" stroke="#a8a800" stroke-width="2.800"/><path d="M-10 10L11 -10" stroke="#6a6a00" stroke-width=".9"/></g>
<g transform="translate(1255.6,113)"><circle r="9.3" fill="none" stroke="#a8a800" stroke-width="3.2"/></g>
<g transform="translate(1287.65,113)"><ellipse rx="11" ry="6.6" fill="none" stroke="#a8a800" stroke-width="3"/></g>
<g transform="translate(1319.7,113)"><path d="M-11 -8.5L7 -8.5L11 8L-7 8Z" fill="url(#pgY)" stroke="#a8a800" stroke-width="1.6" stroke-linejoin="round"/><path d="M-7 8L11 8L11 9.5L-6.5 9.5Z" fill="#a8a800"/></g>
<g transform="translate(1351.75,113)"><rect x="-10" y="-7" width="20" height="14" fill="none" stroke="#a8a800" stroke-width="3.2"/></g>
<g transform="translate(1383.8,113)"><rect x="-11" y="-7" width="22" height="14" rx="7" fill="none" stroke="#a8a800" stroke-width="3"/><path d="M-4 -6V6M4 -6V6" stroke="#a8a800" stroke-width="1" stroke-dasharray="2 1.5"/></g>
<g transform="translate(1415.85,113)"><path d="M-8.5 -8V8A8.5 3.2 0 0 0 8.5 8V-8Z" fill="url(#cyY)"/><ellipse cy="-8" rx="8.5" ry="3.2" fill="#e8e840" stroke="#a8a800" stroke-width=".6"/></g>
<g transform="translate(1447.9,113)"><circle r="10" fill="url(#rsY)"/></g>
<g transform="translate(1479.95,113)"><path d="M0 -12L8.5 8A8.5 3 0 0 1 -8.5 8Z" fill="url(#cyY)"/></g>
<g transform="translate(1512.0,113)"><path d="M-7 -10L10 -10C4 -4 4 4 9 10L-7 10C-12 4 -12 -4 -7 -10Z" fill="url(#sfY)"/><circle cx="1" cy="-9" r="1.2" fill="url(#rsO)"/><circle cx="-2" cy="-6" r="1.2" fill="url(#rsO)"/><circle cx="-4" cy="-2.5" r="1.2" fill="url(#rsO)"/><circle cx="-4.5" cy="1" r="1.2" fill="url(#rsO)"/><circle cx="-4" cy="4.5" r="1.2" fill="url(#rsO)"/><circle cx="-2" cy="8" r="1.2" fill="url(#rsO)"/></g>
<g transform="translate(1544.05,113)"><path d="M-7 -10L10 -10C4 -4 4 4 9 10L-7 10C-12 4 -12 -4 -7 -10Z" fill="url(#sfY)"/></g>
<g transform="translate(1576.1,113)"><path d="M-8 -3V-8H-3M3 -8H8V-3M8 3V8H3M-3 8H-8V3" fill="none" stroke="#b8b800" stroke-width="1.8"/><path d="M-12 0H12M0 -12V12" stroke="#ff9030" stroke-width="2.2"/><circle cx="0" cy="0" r="2" fill="url(#rsR)"/></g>
<g transform="translate(1608.15,113)"><circle cx="-4.5" cy="-4.5" r="2.5" fill="url(#rsY)"/><circle cx="-4.5" cy="4.5" r="2.5" fill="url(#rsY)"/><circle cx="4.5" cy="-4.5" r="2.5" fill="url(#rsY)"/><circle cx="4.5" cy="4.5" r="2.5" fill="url(#rsY)"/></g>
<g transform="translate(1631.5,124)"><path d="M-3 -2.500H3" stroke="#000" stroke-width="1.2"/><path d="M-3 -.5H3L0 2.800Z" fill="#000"/></g>
<path d="M7 137V161" stroke="#fff" stroke-width="2" stroke-dasharray="2 2" transform="translate(1,1)"/><path d="M7 137V161" stroke="#8a90ac" stroke-width="2" stroke-dasharray="2 2"/>
<g transform="translate(24,149)"><path d="M-7 8.500L0 1.500" stroke="#30b070" stroke-width="1.800"/><path d="M-2.500 .5L3 -1L1.500 4.500Z" fill="#30b070"/><g transform="translate(-7,8.5)"><path d="M0 0V-9.5" stroke="#d83040" stroke-width="2"/><path d="M-3 -9.0L0 -13.5L3 -9.0Z" fill="#d83040"/><path d="M0 0H11.5" stroke="#3c68d0" stroke-width="2"/><path d="M11.0 -3L15.5 0L11.0 3Z" fill="#3c68d0"/><rect x="-1" y="-1" width="2" height="2" fill="#20a020"/></g><text x="-3" y="-4" font-size="10" font-weight="bold" fill="#111" font-family="Liberation Sans,sans-serif">Init</text></g>
<g transform="translate(58,149)"><g transform="translate(1,-1)"><path d="M-11 2H-4L-2 4H6V11H-11Z" fill="#f0c838" stroke="#c09010" stroke-width=".8"/><path d="M-3 3V-8" stroke="#d02020" stroke-width="1.8"/><path d="M-6 -7L-3 -12L0 -7Z" fill="#d02020"/><path d="M-3 3L5 -5" stroke="#20a040" stroke-width="1.6"/><path d="M2 -6L7 -7L6 -2Z" fill="#20a040"/><path d="M-3 3H8" stroke="#3060d0" stroke-width="1.8"/><path d="M7 0L12 3L7 6Z" fill="#3060d0"/><path d="M-10 5H5L3 11H-11Z" fill="#f8dc60" opacity=".85"/></g></g>
<g transform="translate(96.5,149)"><g transform="translate(-10,9)"><path d="M0 0V-6" stroke="#d83040" stroke-width="1.6"/><path d="M-3 -5.5L0 -10L3 -5.5Z" fill="#d83040"/><path d="M0 0H6.5" stroke="#3c68d0" stroke-width="1.6"/><path d="M6.0 -3L10.5 0L6.0 3Z" fill="#3c68d0"/><rect x="-1" y="-1" width="2" height="2" fill="#20a020"/></g><path d="M-5 -5L1 -10H11L6 -5Z" fill="#e8f0ff" stroke="#4070d0" stroke-width="1"/><rect x="-5" y="-5" width="11" height="11" fill="#f4f8ff" stroke="#4070d0" stroke-width="1"/><path d="M6 -5L11 -10V1L6 6Z" fill="#c0d4f8" stroke="#4070d0" stroke-width="1"/><circle cx="-2" cy="-2" r="1.4" fill="url(#rsR)"/><circle cx="3" cy="-2" r="1.4" fill="url(#rsR)"/><circle cx="-2" cy="3" r="1.4" fill="url(#rsR)"/><circle cx="3" cy="3" r="1.4" fill="url(#rsR)"/><circle cx="0.5" cy="0.5" r="1.4" fill="url(#rsR)"/><circle cx="3" cy="-7.5" r="1.4" fill="url(#rsR)"/><circle cx="8.5" cy="-4" r="1.4" fill="url(#rsR)"/></g>
<g transform="translate(134,149)"><g transform="translate(-10,9)"><path d="M0 0V-6" stroke="#d83040" stroke-width="1.6"/><path d="M-3 -5.5L0 -10L3 -5.5Z" fill="#d83040"/><path d="M0 0H6.5" stroke="#3c68d0" stroke-width="1.6"/><path d="M6.0 -3L10.5 0L6.0 3Z" fill="#3c68d0"/><rect x="-1" y="-1" width="2" height="2" fill="#20a020"/></g><path d="M-5 -7C0 -13 8 -13 11 -10V2C6 -2 0 0 -3 6Z" fill="#5088e8" stroke="#3060c0" stroke-width=".8"/><ellipse cx="3" cy="-8" rx="2.2" ry="1.8" fill="#f0c0c0" stroke="#c04040" stroke-width=".8"/><ellipse cx="0" cy="-2" rx="2.2" ry="1.8" fill="#f0c0c0" stroke="#c04040" stroke-width=".8"/><ellipse cx="7" cy="-3" rx="2.2" ry="1.8" fill="#f0c0c0" stroke="#c04040" stroke-width=".8"/></g>
<g transform="translate(166,149)"><g transform="translate(-10,9)"><path d="M0 0V-6" stroke="#d83040" stroke-width="1.6"/><path d="M-3 -5.5L0 -10L3 -5.5Z" fill="#d83040"/><path d="M0 0H6.5" stroke="#3c68d0" stroke-width="1.6"/><path d="M6.0 -3L10.5 0L6.0 3Z" fill="#3c68d0"/><rect x="-1" y="-1" width="2" height="2" fill="#20a020"/></g><text x="-6" y="4" font-size="16" font-weight="bold" fill="#222" font-family="Liberation Sans,sans-serif" textLength="18" lengthAdjust="spacingAndGlyphs">RPS</text></g>
<g transform="translate(198,149)"><g transform="translate(-10,9)"><path d="M0 0V-6" stroke="#d83040" stroke-width="1.6"/><path d="M-3 -5.5L0 -10L3 -5.5Z" fill="#d83040"/><path d="M0 0H6.5" stroke="#3c68d0" stroke-width="1.6"/><path d="M6.0 -3L10.5 0L6.0 3Z" fill="#3c68d0"/><rect x="-1" y="-1" width="2" height="2" fill="#20a020"/></g><path d="M-4 -8C0 -12 8 -12 11 -9V6H-2C-6 3 -7 -4 -4 -8Z" fill="#6898f0" stroke="#3060c0" stroke-width=".8"/><path d="M2 -11V6M-3 -2H11" stroke="#fff" stroke-width="1"/><circle cx="-5" cy="-4" r="1.5" fill="url(#rsR)"/><circle cx="-2" cy="2" r="1.5" fill="url(#rsR)"/><circle cx="5" cy="-5" r="1.5" fill="url(#rsR)"/><circle cx="8" cy="-1" r="1.5" fill="url(#rsR)"/><circle cx="5" cy="3" r="1.5" fill="url(#rsR)"/><circle cx="4" cy="-11" r="1.5" fill="url(#rsR)"/></g>
<g transform="translate(230.5,149)"><g transform="translate(-10,9)"><path d="M0 0V-6" stroke="#d83040" stroke-width="1.6"/><path d="M-3 -5.5L0 -10L3 -5.5Z" fill="#d83040"/><path d="M0 0H6.5" stroke="#3c68d0" stroke-width="1.6"/><path d="M6.0 -3L10.5 0L6.0 3Z" fill="#3c68d0"/><rect x="-1" y="-1" width="2" height="2" fill="#20a020"/></g><path d="M-4 -8V5C0 2 7 2 10 5V-8Z" fill="#e8b0c0" stroke="#5080e0" stroke-width="1"/><ellipse cx="3" cy="-8" rx="7" ry="3" fill="#f4c8d0" stroke="#d06080" stroke-width="1"/><path d="M-4 5C0 8 7 8 10 5" fill="none" stroke="#5080e0" stroke-width="1"/></g>
<g transform="translate(262.5,149)"><g transform="translate(-10,9)"><path d="M0 0V-6" stroke="#d83040" stroke-width="1.6"/><path d="M-3 -5.5L0 -10L3 -5.5Z" fill="#d83040"/><path d="M0 0H6.5" stroke="#3c68d0" stroke-width="1.6"/><path d="M6.0 -3L10.5 0L6.0 3Z" fill="#3c68d0"/><rect x="-1" y="-1" width="2" height="2" fill="#20a020"/></g><path d="M-7 -5L2 -10L11 -3L2 2Z" fill="#6090e8" stroke="#2850b0" stroke-width=".8"/><path d="M-7 -5V0L2 7V2Z" fill="#4070d0"/><path d="M2 2L11 -3V2L2 7Z" fill="#e8f0ff" stroke="#2850b0" stroke-width=".6"/><path d="M2 -13V-5M-4 -4L5 1M4 5H10" stroke="#000" stroke-width="1" stroke-dasharray="1.2 1"/><path d="M0 -10L2 -14L4 -10Z" fill="#000"/></g>
<g transform="translate(300,149)"><path d="M0 -12V8M-9 4H9M-8 8H-2V11H-8ZM-10 -2H-4M4 -6H10" stroke="#a8aec4" stroke-width="1.6" fill="none"/><path d="M2 6L8 11M8 6V11H3" stroke="#b8bed0" stroke-width="1.2" fill="none"/></g>
<g transform="translate(330,149)"><path d="M3 -9A9 9 0 1 0 8 6" fill="none" stroke="#a8aec4" stroke-width="2"/></g>
<path d="M76.5 137V162" stroke="#9aa0b8"/><path d="M77.5 137V162" stroke="#fff" opacity=".7"/>
<path d="M114.5 137V162" stroke="#9aa0b8"/><path d="M115.5 137V162" stroke="#fff" opacity=".7"/>
<path d="M280.5 137V162" stroke="#9aa0b8"/><path d="M281.5 137V162" stroke="#fff" opacity=".7"/>
<g transform="translate(617,149)"><path d="M-11.500 -6V4A11.500 4.500 0 0 0 11.500 4V-6Z" fill="url(#cyB)"/><ellipse cy="-6" rx="11.500" ry="5" fill="#e8f0ff" stroke="#f01818" stroke-width="1.200"/><ellipse cy="-6" rx="8" ry="3" fill="none" stroke="#f01818" stroke-width="1"/><ellipse cy="-6" rx="4" ry="1" fill="#a8c4f4"/><circle cy="-6" r="1" fill="#f01818"/></g>
<g transform="translate(649,149)"><path d="M-11 -6V6A11 4 0 0 0 11 6V-8Z" fill="url(#cyB)"/><path d="M-11 -6C-6 -11 6 -12 11 -8C6 -4 -6 -3 -11 -6Z" fill="#4c7cdc"/><path d="M-8 3C-2 6 6 4 9 -1" fill="none" stroke="#e02020" stroke-width="1.300"/></g>
<g transform="translate(681,149)"><path d="M-7 -10L10 -10C4 -4 4 4 9 10L-7 10C-12 4 -12 -4 -7 -10Z" fill="url(#sfB)"/><path d="M3 -8H10M3 -4H9M3 0H9M3 4H9M3 8H10" stroke="#d01010" stroke-width="1"/><path d="M8 -9.5L11 -8L8 -6.5ZM7 -5.5L10 -4L7 -2.5ZM7 -1.5L10 0L7 1.5ZM7 2.5L10 4L7 5.5ZM8 6.5L11 8L8 9.5Z" fill="#d01010"/></g>
<g transform="translate(713,149)"><path d="M-7 -10L10 -10C4 -4 4 4 9 10L-7 10C-12 4 -12 -4 -7 -10Z" fill="url(#sfB)"/><path d="M4 -8C-6 -4 6 2 -5 8" fill="none" stroke="#e02020" stroke-width="1.4"/></g>
<g transform="translate(745,149)"><path d="M-7 -10L10 -10C4 -4 4 4 9 10L-7 10C-12 4 -12 -4 -7 -10Z" fill="url(#sfB)"/><path d="M3 -8C-7 -4 5 2 -6 8" fill="none" stroke="#e02020" stroke-width="1.4"/><text x="4" y="11.500" font-size="13" font-weight="bold" fill="#e80808" font-family="Liberation Sans,sans-serif" stroke="#fff" stroke-width=".5" paint-order="stroke">?</text></g>
<g transform="translate(768.5,160)"><path d="M-3 -2.500H3" stroke="#000" stroke-width="1.2"/><path d="M-3 -.5H3L0 2.800Z" fill="#000"/></g>
<path d="M782 137V161" stroke="#fff" stroke-width="2" stroke-dasharray="2 2" transform="translate(1,1)"/><path d="M782 137V161" stroke="#8a90ac" stroke-width="2" stroke-dasharray="2 2"/>
<g transform="translate(800,149)"><g transform="translate(-2,-1)"><path d="M-7.0 -9.0H3.0L7.0 -5.0V9.0H-7.0Z" fill="url(#docG)" stroke="#5a7ad0" stroke-width="1"/><path d="M3.0 -9.0V-5.0H7.0" fill="#fff" stroke="#5a7ad0" stroke-width=".8"/></g><path d="M-6 -6H1M-6 -3.5H3M-6 -1H3M-6 1.5H3M-6 4H3" stroke="#5a7ad0" stroke-width=".8"/><path d="M2 3C6 0 9 2 12 0V8C9 10 6 8 3 11Z" fill="#f0a0a8" stroke="#e06070" stroke-width=".6"/></g>
<g transform="translate(832.5,149)"><path d="M-7 -10L10 -10C4 -4 4 4 9 10L-7 10C-12 4 -12 -4 -7 -10Z" fill="url(#sfB)"/><circle cx="-6" cy="-5" r="1.3" fill="url(#rsO)"/><circle cx="-6" cy="0" r="1.3" fill="url(#rsO)"/><circle cx="-6" cy="5" r="1.3" fill="url(#rsO)"/><circle cx="-1" cy="-5" r="1.3" fill="url(#rsO)"/><circle cx="-1" cy="0" r="1.3" fill="url(#rsO)"/><circle cx="-1" cy="5" r="1.3" fill="url(#rsO)"/><circle cx="4" cy="-5" r="1.3" fill="url(#rsO)"/><circle cx="4" cy="0" r="1.3" fill="url(#rsO)"/><circle cx="4" cy="5" r="1.3" fill="url(#rsO)"/><text x="-13" y="-6" font-size="8" font-weight="bold" font-family="Liberation Sans,sans-serif">u</text><text x="6" y="11" font-size="8" font-weight="bold" font-family="Liberation Sans,sans-serif">v</text></g>
<g transform="translate(864,149)"><path d="M-7 -10L10 -10C4 -4 4 4 9 10L-7 10C-12 4 -12 -4 -7 -10Z" fill="url(#sfB)"/><path d="M-9 -8L6 -9M-10 -3L5 -4M-10 2L5 1M-9 7L7 7M-9 -8L-9 7M-4 -8.5L-5 7M1 -8.7L0 7M6 -9L6 7" stroke="#e05060" stroke-width="1" fill="none"/></g>
<g transform="translate(895.5,149)"><path d="M-7 -10L10 -10C4 -4 4 4 9 10L-7 10C-12 4 -12 -4 -7 -10Z" fill="url(#sfB)"/></g>
<g transform="translate(927.5,149)"><path d="M-7 -10L10 -10C4 -4 4 4 9 10L-7 10C-12 4 -12 -4 -7 -10Z" fill="url(#sfB)"/><text x="3" y="11.500" font-size="13" font-weight="bold" fill="#e80808" font-family="Liberation Sans,sans-serif" stroke="#fff" stroke-width=".5" paint-order="stroke">?</text></g>
<g transform="translate(951,160)"><path d="M-3 -2.500H3" stroke="#000" stroke-width="1.2"/><path d="M-3 -.5H3L0 2.800Z" fill="#000"/></g>
<path d="M965 137V161" stroke="#fff" stroke-width="2" stroke-dasharray="2 2" transform="translate(1,1)"/><path d="M965 137V161" stroke="#8a90ac" stroke-width="2" stroke-dasharray="2 2"/>
<g transform="translate(983,149)"><path d="M-9 -8L9 8H-9Z" fill="#7098e8" stroke="#3868c8" stroke-width="1" opacity=".9"/><path d="M-9 -8H8V6Z" fill="none" stroke="#4878d8" stroke-width="2"/><path d="M-6 1V5H-2Z" fill="#e8f0ff"/><rect x="-10" y="9" width="21" height="3" fill="#f0b830" stroke="#c08000" stroke-width=".5"/></g>
<g transform="translate(1020.5,149)"><path d="M-11 0H11" fill="none" stroke="#3c8c86" stroke-width="2.6"/></g>
<g transform="translate(1053,149)"><path d="M-7 -6H10L6 6H-11Z" fill="none" stroke="#3c8c86" stroke-width="2.6"/></g>
<g transform="translate(1085,149)"><circle r="9.5" fill="none" stroke="#3c8c86" stroke-width="2.2"/></g>
<g transform="translate(1117,149)"><circle r="5.5" fill="none" stroke="#3c8c86" stroke-width="2"/><path d="M-2 -11L-8 11M8 -11L2 11" fill="none" stroke="#3c8c86" stroke-width="2.6"/></g>
<g transform="translate(1149,149)"><path d="M-9 5A9 9.5 0 0 1 9 5" fill="none" stroke="#3c8c86" stroke-width="2.2"/></g>
<g transform="translate(1181,149)"><path d="M-10 5A10 10.5 0 0 1 10 5Z" fill="none" stroke="#3c8c86" stroke-width="2"/></g>
<g transform="translate(1219,149)"><path d="M-4 -11L-9 11M8 -11L3 11" fill="none" stroke="#a020a0" stroke-width="3"/></g>
<g transform="translate(1250.5,149)"><path d="M0 -11V9M-11 9.5H11" fill="none" stroke="#a020a0" stroke-width="3"/></g>
<g transform="translate(1283,149)"><path d="M9 -9L-10 9H11" fill="none" stroke="#a020a0" stroke-width="3"/></g>
<g transform="translate(1314.5,149)"><circle r="10" fill="none" stroke="#a020a0" stroke-width="1.8"/><circle r="2.4" fill="#a020a0"/></g>
<g transform="translate(1346.5,149)"><circle r="10" fill="none" stroke="#a020a0" stroke-width="2"/><circle r="5" fill="none" stroke="#a020a0" stroke-width="2"/></g>
<g transform="translate(1379,149)"><path d="M-8 -8H8M-11 0H11M-8 8H8" fill="none" stroke="#a020a0" stroke-width="2.6"/></g>
<g transform="translate(1411.5,149)"><path d="M-12 10L-6 -4L-9 -4L-2 -12L-2 -4L-4.5 -4L-9 7.5H0L4.5 -4L2 -4L9 -12L9 -4L6.5 -4L1 10Z" fill="#a020a0"/></g>
<g transform="translate(1444,149)"><path d="M-6 11L-1 -3L-4 -3L4 -12L4 -3L1.5 -3L-3 11Z" fill="#a020a0"/></g>
<g transform="translate(1474.5,149)"><g transform="translate(0,0)"><circle r="7" fill="none" stroke="#a020a0" stroke-width="2.4"/><path d="M-10.5 0H10.5M0 -10.5V10.5" stroke="#a020a0" stroke-width="2.4"/></g></g>
<g transform="translate(1507,149)"><g transform="translate(-5,-5)"><circle r="3.6" fill="none" stroke="#a020a0" stroke-width="1.5"/><path d="M-7.1 0H7.1M0 -7.1V7.1" stroke="#a020a0" stroke-width="1.5"/></g><g transform="translate(5,5)"><circle r="3.6" fill="none" stroke="#a020a0" stroke-width="1.5"/><path d="M-7.1 0H7.1M0 -7.1V7.1" stroke="#a020a0" stroke-width="1.5"/></g></g>
<g transform="translate(1545,149)"><path d="M9 -6L-10 11H12" fill="none" stroke="#b0b020" stroke-width="2.4"/><text x="-11" y="-1" font-size="12" font-style="italic" font-weight="bold" fill="#c01010" font-family="Liberation Serif,serif">θ</text><g transform="translate(3,0) scale(0.7)"><path d="M0 0L0 12L3 9.5L5.5 15L7.5 14L5 8.8L9 8.8Z" fill="#222" stroke="#000" stroke-width="1.1" stroke-linejoin="round"/></g></g>
<g transform="translate(1577,149)"><path d="M-10 -10V11M10 -10V11" stroke="#b0b020" stroke-width="2.6"/><path d="M-7 7H7" stroke="#000" stroke-width="1.4"/><path d="M-8 7L-4 4.5V9.5ZM8 7L4 4.5V9.5Z" fill="#000"/><text x="-4" y="2" font-size="14" font-style="italic" font-weight="bold" fill="#c01010" font-family="Liberation Sans,sans-serif">d</text></g>
<g transform="translate(1615.5,149)"><path d="M-8 -9V8H9Z" fill="#6090e8" stroke="#3868c8" stroke-width="1.2"/><path d="M-5 0V5H0Z" fill="#e8f0ff"/><text x="2" y="-1" font-size="13" font-weight="bold" fill="#3868c8" font-family="Liberation Sans,sans-serif">T</text><rect x="-11" y="10" width="23" height="3" fill="#f0b830" stroke="#c08000" stroke-width=".5"/></g>
<path d="M1001.5 137V162" stroke="#9aa0b8"/><path d="M1002.5 137V162" stroke="#fff" opacity=".7"/>
<path d="M1199.5 137V162" stroke="#9aa0b8"/><path d="M1200.5 137V162" stroke="#fff" opacity=".7"/>
<path d="M1525.5 137V162" stroke="#9aa0b8"/><path d="M1526.5 137V162" stroke="#fff" opacity=".7"/>
<path d="M1595.5 137V162" stroke="#9aa0b8"/><path d="M1596.5 137V162" stroke="#fff" opacity=".7"/>
<g transform="translate(1638.5,160)"><path d="M-3 -2.500H3" stroke="#000" stroke-width="1.2"/><path d="M-3 -.5H3L0 2.800Z" fill="#000"/></g>
<g transform="translate(20,185)"><path d="M-8 11C0 9 3 0 6 -10V11Z" fill="#60b0a8" stroke="#2c7c78" stroke-width="1"/><path d="M-2 -12L-9 4" stroke="#e07800" stroke-width="1.8"/><path d="M-12 1L-10 8L-5 3Z" fill="#c06000"/></g>
<g transform="translate(52,185)"><path d="M-4.5 -10.5H4.5L10.5 -4.5V4.5L4.5 10.5H-4.5L-10.5 4.5V-4.5Z" fill="#e01818" stroke="#a00808" stroke-width=".8"/><text x="-8" y="2.600" font-size="6.800" font-weight="bold" fill="#fff" font-family="Liberation Sans,sans-serif" textLength="16" lengthAdjust="spacingAndGlyphs">STOP</text></g>
<g transform="translate(89.5,185)"><path d="M-11 -8.500H5M-9 -4.500H5M-11 -.5H5M-9 3.500H5M-9 7.500H5" stroke="#4a9c94" stroke-width="3"/><path d="M-11 -9H5M-9 -5H5M-11 -1H5M-9 3H5M-9 7H5" stroke="#a8dcd8" stroke-width=".9"/><path d="M7 -3V9M10 -2V11" stroke="#c86400" stroke-width="1.500"/><path d="M4.500 -2.500L7 -7L9.500 -2.500ZM7.500 9.500L10 14L12.500 9.500Z" fill="#c86400"/></g>
<g transform="translate(122,185)"><rect x="-11" y="0" width="15" height="11" fill="url(#ylG)" stroke="#c08000" stroke-width=".8"/><path d="M1 0V-5A5 5 0 0 1 11 -5V-2" fill="none" stroke="#c0c4d0" stroke-width="2.4"/></g>
<g transform="translate(154,185)"><rect x="-12" y="-10" width="20" height="17" fill="#f4f8ff" stroke="#5080d0" stroke-width="1"/><rect x="-12" y="-10" width="20" height="2.5" fill="#4a80e0"/><circle cx="5" cy="5" r="7" fill="url(#rsD)"/></g>
<g transform="translate(186,185)"><circle cx="-1" cy="-6" r="6.5" fill="url(#rsD)" opacity=".55"/><circle cx="5" cy="-1" r="7" fill="url(#rsD)"/><path d="M-11 1L-2 12M-2 1L-11 12" stroke="#f03010" stroke-width="2.2"/></g>
<g transform="translate(217.5,185)"><circle cx="-3" cy="-1" r="6" fill="url(#rsG)"/><path d="M7 1V10" stroke="#98a0b8" stroke-width="1.4"/><path d="M4.5 8L7 12L9.5 8Z" fill="#98a0b8"/></g>
<path d="M70.5 173V198" stroke="#9aa0b8"/><path d="M71.5 173V198" stroke="#fff" opacity=".7"/>
<g transform="translate(291,185)"><path d="M-3 -1.500H3L0 1.800Z" fill="#000"/></g>
<rect x="860.5" y="173.5" width="31" height="31" fill="url(#selG)" stroke="#2f8fc4"/>
<rect x="1043.5" y="173.5" width="31" height="31" fill="url(#selG)" stroke="#2f8fc4"/>
<g transform="translate(631,189)"><g transform="translate(-2,-1.5)"><polygon points="8.4,-1.1 8.4,1.1 5.8,1.6 5.2,3.0 6.7,5.2 5.2,6.7 3.0,5.2 1.6,5.8 1.1,8.4 -1.1,8.4 -1.6,5.8 -3.0,5.2 -5.2,6.7 -6.7,5.2 -5.2,3.0 -5.8,1.6 -8.4,1.1 -8.4,-1.1 -5.8,-1.6 -5.2,-3.0 -6.7,-5.2 -5.2,-6.7 -3.0,-5.2 -1.6,-5.8 -1.1,-8.4 1.1,-8.4 1.6,-5.8 3.0,-5.2 5.2,-6.7 6.7,-5.2 5.2,-3.0 5.8,-1.6" fill="#f0a818" stroke="#b84800" stroke-width="1"/><circle r="2.500" fill="#ffe9a8"/><rect x="-1.3" y="-10" width="2.8" height="9" fill="#222"/></g><g transform="translate(4,7)"><ellipse rx="6.5" ry="4" fill="#fff" stroke="#1848c0" stroke-width="2"/><circle r="2" fill="#1848c0"/></g></g>
<g transform="translate(670,189)"><g transform="translate(-2,-1)"><path d="M-9 -10H7L9 -8V9H-9Z" fill="#5858c0" stroke="#3838a0" stroke-width=".8"/><rect x="-5" y="-10" width="9" height="6" fill="#d8d8e8"/><rect x="0" y="-9" width="2.5" height="4" fill="#5858c0"/><rect x="-6" y="0" width="12" height="9" fill="#fff"/><path d="M-4 3H4M-4 5.5H4" stroke="#999" stroke-width=".8"/></g><rect x="1" y="2" width="9" height="10" fill="#f0f4ff" stroke="#3040e0" stroke-width="1"/><rect x="3" y="4" width="5" height="6" fill="#d0dcff" stroke="#3040e0" stroke-width=".5"/></g>
<g transform="translate(701,189)"><path d="M7 -8V8L-8 0Z" fill="#a0a8c4"/></g>
<g transform="translate(773,189)"><path d="M-7 -8V8L8 0Z" fill="#a0a8c4"/></g>
<g transform="translate(805.5,189)"><g transform="translate(-2,-2)"><path d="M-7.5 -9.5H3.5L7.5 -5.5V9.5H-7.5Z" fill="url(#docG)" stroke="#5a7ad0" stroke-width="1"/><path d="M3.5 -9.5V-5.5H7.5" fill="#fff" stroke="#5a7ad0" stroke-width=".8"/></g><rect x="-7" y="-8" width="9" height="13" fill="none" stroke="#88a4e8" stroke-width=".8"/><path d="M6 2V14M0 8H12M2 4L10 12M2 12L10 4" stroke="#f8d030" stroke-width="1.6"/><circle cx="6" cy="8" r="2" fill="#fff8c0"/></g>
<g transform="translate(838,189)"><g transform="translate(-3,-2.5)"><polygon points="8.4,-1.1 8.4,1.1 5.8,1.6 5.2,3.0 6.7,5.2 5.2,6.7 3.0,5.2 1.6,5.8 1.1,8.4 -1.1,8.4 -1.6,5.8 -3.0,5.2 -5.2,6.7 -6.7,5.2 -5.2,3.0 -5.8,1.6 -8.4,1.1 -8.4,-1.1 -5.8,-1.6 -5.2,-3.0 -6.7,-5.2 -5.2,-6.7 -3.0,-5.2 -1.6,-5.8 -1.1,-8.4 1.1,-8.4 1.6,-5.8 3.0,-5.2 5.2,-6.7 6.7,-5.2 5.2,-3.0 5.8,-1.6" fill="#f0a818" stroke="#b84800" stroke-width="1"/><circle r="2.500" fill="#ffe9a8"/><rect x="-1.3" y="-10" width="2.8" height="9" fill="#222"/></g><g transform="translate(5,5)"><path d="M-5.0 -6.0H1.0L5.0 -2.0V6.0H-5.0Z" fill="url(#docG)" stroke="#5a7ad0" stroke-width="1"/><path d="M1.0 -6.0V-2.0H5.0" fill="#fff" stroke="#5a7ad0" stroke-width=".8"/></g></g>
<g transform="translate(876,189)"><g transform="translate(-11,-11)"><rect width="15" height="10" fill="#e8ecf8" stroke="#8890c8" stroke-width="1.1"/><rect x=".5" y=".5" width="14" height="2.6" fill="#a8b0d8"/><path d="M2 5.0H13" stroke="#111" stroke-width="1.2" stroke-dasharray="2 1"/><path d="M2 7.6H13" stroke="#111" stroke-width="1.2" stroke-dasharray="2 1"/></g><g transform="translate(-4,-4)"><rect width="15" height="10" fill="#fff" stroke="#2038c0" stroke-width="1.1"/><rect x=".5" y=".5" width="14" height="2.6" fill="#3050d8"/><path d="M2 5.0H13" stroke="#111" stroke-width="1.2" stroke-dasharray="2 1"/><path d="M2 7.6H13" stroke="#111" stroke-width="1.2" stroke-dasharray="2 1"/></g><path d="M3 6L12 13M3 6L6 9" stroke="#2038c0" stroke-width="1.2" fill="none"/></g>
<g transform="translate(908.5,189)"><g transform="translate(-10,-12)"><rect width="17" height="11" fill="#e8f0ff" stroke="#2038c0" stroke-width="1.1"/><rect x=".5" y=".5" width="16" height="2.6" fill="#3050d8"/><path d="M2 5.0H15" stroke="#111" stroke-width="1.2" stroke-dasharray="2 1"/><path d="M2 7.6H15" stroke="#111" stroke-width="1.2" stroke-dasharray="2 1"/><path d="M2 10.2H15" stroke="#111" stroke-width="1.2" stroke-dasharray="2 1"/></g><path d="M-6 -1L-13 8" stroke="#2038c0" stroke-width="1.4"/><g transform="translate(2,-4) scale(1.05)"><path d="M0 0L0 12L3 9.5L5.5 15L7.5 14L5 8.8L9 8.8Z" fill="#88b0f8" stroke="#1030b0" stroke-width="1.1" stroke-linejoin="round"/></g></g>
<g transform="translate(941,189)"><rect x="-11" y="-10.6" width="6" height="3.2" fill="#e8f0ff" stroke="#2848d0" stroke-width="1"/><rect x="-11" y="-1.6" width="6" height="3.2" fill="#e8f0ff" stroke="#2848d0" stroke-width="1"/><rect x="-11" y="7.4" width="6" height="3.2" fill="#e8f0ff" stroke="#2848d0" stroke-width="1"/><rect x="-3" y="-10.6" width="6" height="3.2" fill="#e8f0ff" stroke="#2848d0" stroke-width="1"/><rect x="-3" y="7.4" width="6" height="3.2" fill="#e8f0ff" stroke="#2848d0" stroke-width="1"/><rect x="5" y="-10.6" width="6" height="3.2" fill="#e8f0ff" stroke="#2848d0" stroke-width="1"/><rect x="5" y="-1.6" width="6" height="3.2" fill="#e8f0ff" stroke="#2848d0" stroke-width="1"/><rect x="5" y="7.4" width="6" height="3.2" fill="#e8f0ff" stroke="#2848d0" stroke-width="1"/><path d="M-5 -8L5 8M5 -8L-5 8M0 -7V7M-5 0H5" stroke="#2848d0" stroke-width=".9"/><rect x="-1.5" y="-1.5" width="3" height="3" fill="#fff" stroke="#2848d0" stroke-width=".8"/></g>
<g transform="translate(988.5,189)"><rect x="-11" y="-8" width="22" height="15" fill="#f4e8ff" stroke="#a860e0" stroke-width="1.2"/><rect x="-10.5" y="-7.5" width="21" height="3" fill="#d0a8f0"/><text x="-9" y="5.5" font-size="10" font-weight="bold" fill="#106018" font-family="Liberation Sans,sans-serif">D</text><path d="M0 -1H8M0 1.8H8M0 4.6H8" stroke="#111" stroke-width="1.2" stroke-dasharray="2 1"/></g>
<g transform="translate(1021.5,189)"><g transform="translate(-2,-3)"><rect x="-11" y="-8" width="22" height="15" fill="#f4e8ff" stroke="#a860e0" stroke-width="1.2"/><rect x="-10.5" y="-7.5" width="21" height="3" fill="#d0a8f0"/><text x="-9" y="5.5" font-size="10" font-weight="bold" fill="#106018" font-family="Liberation Sans,sans-serif">D</text><path d="M0 -1H8M0 1.8H8M0 4.6H8" stroke="#111" stroke-width="1.2" stroke-dasharray="2 1"/></g><g transform="translate(2,0) scale(1.0)"><path d="M0 0L0 12L3 9.5L5.5 15L7.5 14L5 8.8L9 8.8Z" fill="#e0b0f8" stroke="#9040d0" stroke-width="1.1" stroke-linejoin="round"/></g></g>
<g transform="translate(1059,189)"><g transform="translate(-11,-11)"><rect width="15" height="10" fill="#e8f8ec" stroke="#60c878" stroke-width="1.1"/><rect x=".5" y=".5" width="14" height="2.6" fill="#90e0a0"/><path d="M2 5.0H13" stroke="#111" stroke-width="1.2" stroke-dasharray="2 1"/><path d="M2 7.6H13" stroke="#111" stroke-width="1.2" stroke-dasharray="2 1"/></g><g transform="translate(-4,-4)"><rect width="15" height="10" fill="#fff" stroke="#10a030" stroke-width="1.1"/><rect x=".5" y=".5" width="14" height="2.6" fill="#20c040"/><path d="M2 5.0H13" stroke="#111" stroke-width="1.2" stroke-dasharray="2 1"/><path d="M2 7.6H13" stroke="#111" stroke-width="1.2" stroke-dasharray="2 1"/></g><path d="M2 6L4 10L6 6M7 6L10 10L11 6" stroke="#60c878" stroke-width="1" fill="#e0ffe8"/></g>
<g transform="translate(1098,189)"><g transform="translate(-3,-2.5)"><polygon points="8.4,-1.1 8.4,1.1 5.8,1.6 5.2,3.0 6.7,5.2 5.2,6.7 3.0,5.2 1.6,5.8 1.1,8.4 -1.1,8.4 -1.6,5.8 -3.0,5.2 -5.2,6.7 -6.7,5.2 -5.2,3.0 -5.8,1.6 -8.4,1.1 -8.4,-1.1 -5.8,-1.6 -5.2,-3.0 -6.7,-5.2 -5.2,-6.7 -3.0,-5.2 -1.6,-5.8 -1.1,-8.4 1.1,-8.4 1.6,-5.8 3.0,-5.2 5.2,-6.7 6.7,-5.2 5.2,-3.0 5.8,-1.6" fill="#f0a818" stroke="#b84800" stroke-width="1"/><circle r="2.500" fill="#ffe9a8"/><rect x="-1.3" y="-10" width="2.8" height="9" fill="#222"/></g><g transform="translate(-3,2)"><rect width="13" height="10" fill="#fff" stroke="#a040d8" stroke-width="1.1"/><rect x=".5" y=".5" width="12" height="2.6" fill="#b060e0"/><path d="M2 5.0H11" stroke="#111" stroke-width="1.2" stroke-dasharray="2 1"/><path d="M2 7.6H11" stroke="#111" stroke-width="1.2" stroke-dasharray="2 1"/></g><rect x="4" y="3" width="6" height="9" fill="none" stroke="#20c030" stroke-width="1.2"/></g>
<g transform="translate(1205,189)"><g transform="translate(-2,-2)"><path d="M-9 -10H7L9 -8V9H-9Z" fill="#5858c0" stroke="#3838a0" stroke-width=".8"/><rect x="-5" y="-10" width="9" height="6" fill="#d8d8e8"/><rect x="0" y="-9" width="2.5" height="4" fill="#5858c0"/><rect x="-6" y="0" width="12" height="9" fill="#fff"/><path d="M-4 3H4M-4 5.5H4" stroke="#999" stroke-width=".8"/></g><g transform="translate(5,7)"><ellipse rx="6.5" ry="4" fill="#fff" stroke="#1848c0" stroke-width="2"/><circle r="2" fill="#1848c0"/></g></g>
<g transform="translate(1243.5,189)"><g transform="translate(-7,5)"><path d="M-4.5 -6.0H0.5L4.5 -2.0V6.0H-4.5Z" fill="url(#docG)" stroke="#5a7ad0" stroke-width="1"/><path d="M0.5 -6.0V-2.0H4.5" fill="#fff" stroke="#5a7ad0" stroke-width=".8"/></g><path d="M-9 3H-5M-9 5.5H-5M-9 8H-5" stroke="#5a7ad0" stroke-width=".7"/><g transform="translate(4,-4) scale(.9)"><path d="M2 2L8 13" stroke="#5a5a5a" stroke-width="3.4" stroke-linecap="round"/><path d="M2 2L8 13" stroke="#c8c8c8" stroke-width="1.4" stroke-linecap="round"/><circle cx="-1" cy="-4" r="7" fill="url(#glass)" stroke="#8a9cb8" stroke-width="1.6"/><path d="M-5 -6A5 5 0 0 1 1 -9" fill="none" stroke="#fff" stroke-width="1.2" opacity=".8"/></g></g>
<path d="M650.5 177V202" stroke="#9aa0b8"/><path d="M651.5 177V202" stroke="#fff" opacity=".7"/>
<path d="M856.5 177V202" stroke="#9aa0b8"/><path d="M857.5 177V202" stroke="#fff" opacity=".7"/>
<path d="M969.5 177V202" stroke="#9aa0b8"/><path d="M970.5 177V202" stroke="#fff" opacity=".7"/>
<path d="M1039.5 177V202" stroke="#9aa0b8"/><path d="M1040.5 177V202" stroke="#fff" opacity=".7"/>
<path d="M1077.5 177V202" stroke="#9aa0b8"/><path d="M1078.5 177V202" stroke="#fff" opacity=".7"/>
<path d="M1115.5 177V202" stroke="#9aa0b8"/><path d="M1116.5 177V202" stroke="#fff" opacity=".7"/>
<path d="M1223.5 177V202" stroke="#9aa0b8"/><path d="M1224.5 177V202" stroke="#fff" opacity=".7"/>
<g transform="translate(960.5,189)"><path d="M-3 -1.500H3L0 1.800Z" fill="#000"/></g>
<g transform="translate(1181,189)"><path d="M-3 -1.500H3L0 1.800Z" fill="#000"/></g>
<path d="M742.5 187H749.5L746 191Z" fill="#808080"/>
<g transform="translate(1583,40)"><g transform="scale(1)"><path d="M-6.500 -6.500H6.500L7 -1C6.500 3.500 2 5.500 -1 5L-3.500 4.500L-6.500 -1Z" fill="#fff" opacity=".55" stroke="#fff" stroke-width="1.200" stroke-opacity=".5"/><rect x="-7" y="-9.500" width="14" height="3.500" fill="#a4a4a4"/><rect x="-7" y="-7.500" width="14" height="1.500" fill="#6a6a6a"/><path d="M-6 -6H6L6.500 -1C6 3 2 5 -1 4.500L-3 4L-5.500 -1Z" fill="#1c1c1c"/><circle cx="1.500" cy="-1.500" r="2.600" fill="#505050"/><circle cx="-2" cy="0" r="1.600" fill="#3a3a3a"/><path d="M-2 4L-5.500 9.200" stroke="#fff" stroke-width="2.400" opacity=".5"/><path d="M-2 4L-5.500 9.200" stroke="#2a2a2a" stroke-width="1.300"/><path d="M-3 3L0 5L-2.500 6.500Z" fill="#888"/><circle cx="-5.700" cy="9.500" r=".85" fill="#e01010"/></g></g>
<g transform="translate(1601,41)"><path d="M-3 -1.500H3L0 1.800Z" fill="#000"/></g>
<g transform="translate(1733,40)"><path d="M-11 2H-4L-2 4H6V11H-11Z" fill="#f0c838" stroke="#c09010" stroke-width=".8"/><path d="M-3 3V-8" stroke="#d02020" stroke-width="1.8"/><path d="M-6 -7L-3 -12L0 -7Z" fill="#d02020"/><path d="M-3 3L5 -5" stroke="#20a040" stroke-width="1.6"/><path d="M2 -6L7 -7L6 -2Z" fill="#20a040"/><path d="M-3 3H8" stroke="#3060d0" stroke-width="1.8"/><path d="M7 0L12 3L7 6Z" fill="#3060d0"/><path d="M-10 5H5L3 11H-11Z" fill="#f8dc60" opacity=".85"/></g>
<g transform="translate(1842,40)"><path d="M-3 -13L3 -13L8 9L-4 12Z" fill="#f8b010" stroke="#e08000" stroke-width=".8" transform="rotate(-8)"/><path d="M0 -9L2.5 7" stroke="#e02010" stroke-width="1.4" transform="rotate(-8)"/><circle cx="3.5" cy="7.5" r="1.8" fill="#e02010"/></g>
<g transform="translate(1894,40)"><rect x="-14" y="-12" width="15" height="12" fill="#dde4f0" stroke="#a8b4cc" stroke-width="1"/><rect x="-8" y="-5" width="15" height="12" fill="#e8edf6" stroke="#a8b4cc" stroke-width="1"/><path d="M-3 7V11H-10V14H12" fill="none" stroke="#98a4bc" stroke-width="2"/><path d="M7 -7L14 0M14 -7L7 0" stroke="#a0acc8" stroke-width="2"/></g>
<path d="M1712.5 29V52" stroke="#9aa0b8"/>
<path d="M1815.5 29V52" stroke="#9aa0b8"/>
<path d="M1865.5 29V52" stroke="#9aa0b8"/>
</svg>
<svg style="left:0;top:0" width="1919" height="1043" viewBox="0 0 1919 1043">
<rect x="1842.5" y="763.50" width="19" height="15.41" fill="#ff0000" stroke="#000" stroke-width="1"/>
<rect x="1842.5" y="778.91" width="19" height="15.41" fill="#ff5a00" stroke="#000" stroke-width="1"/>
<rect x="1842.5" y="794.32" width="19" height="15.41" fill="#ffaa00" stroke="#000" stroke-width="1"/>
<rect x="1842.5" y="809.73" width="19" height="15.41" fill="#ffff00" stroke="#000" stroke-width="1"/>
<rect x="1842.5" y="825.14" width="19" height="15.41" fill="#aaff00" stroke="#000" stroke-width="1"/>
<rect x="1842.5" y="840.55" width="19" height="15.41" fill="#00ff00" stroke="#000" stroke-width="1"/>
<rect x="1842.5" y="855.95" width="19" height="15.41" fill="#00ffaa" stroke="#000" stroke-width="1"/>
<rect x="1842.5" y="871.36" width="19" height="15.41" fill="#00ffff" stroke="#000" stroke-width="1"/>
<rect x="1842.5" y="886.77" width="19" height="15.41" fill="#00aaff" stroke="#000" stroke-width="1"/>
<rect x="1842.5" y="902.18" width="19" height="15.41" fill="#0055ff" stroke="#000" stroke-width="1"/>
<rect x="1842.5" y="917.59" width="19" height="15.41" fill="#0000ff" stroke="#000" stroke-width="1"/>
<path d="M675.7 930.5L657 914" stroke="#0a8a18" stroke-width="1.6"/><path d="M655.5 912.5L664.5 915.5L660 921Z" fill="#0a7a14"/>
<path d="M675.7 930.5L705 926" stroke="#1a5cff" stroke-width="1.8"/><path d="M706.5 925.5L696 923.5L697 930.5Z" fill="#1a5cff"/>
<path d="M675.7 930.5L681.5 901" stroke="#e01010" stroke-width="1.8"/><path d="M681.8 899L684 910L677 909.5Z" fill="#e01010"/>
<text x="681.5" y="891" font-family="Liberation Sans,sans-serif" font-size="19.5" fill="#b01010" text-anchor="middle">Z</text>
<text x="651" y="907.5" font-family="Liberation Sans,sans-serif" font-size="19.5" fill="#0a7a14" text-anchor="middle">Y</text>
<text x="711.8" y="923" font-family="Liberation Sans,sans-serif" font-size="19.5" fill="#1a5cff" text-anchor="middle">X</text>
<g><path d="M2.300 18.200L7 5.500L9.800 11L12.200 3L11.600 15L7.600 11L5 18Z" fill="#f59a10"/><path d="M4 15.500L7.200 8L9.700 13L11.500 5.500" fill="none" stroke="#ffc850" stroke-width=".9"/><text x="10.800" y="14" font-size="5.800" font-weight="bold" font-style="italic" fill="#f0a010" font-family="Liberation Sans,sans-serif">ET</text><text x="6" y="18.800" font-size="5" font-weight="bold" font-style="italic" fill="#3a8ab8" font-family="Liberation Sans,sans-serif" textLength="12" lengthAdjust="spacingAndGlyphs">DMIS</text></g>
<path d="M1800 10.500H1810" stroke="#000" stroke-width="1"/>
<path d="M1844.500 7.500H1851.500V14.500H1844.500ZM1846.500 7.500V5.500H1853.500V12.500H1851.500" fill="none" stroke="#000" stroke-width="1"/>
<path d="M1890 5L1900 15M1900 5L1890 15" stroke="#000" stroke-width="1.1"/>
<defs><linearGradient id="tsh" x1="0" y1="0" x2="0" y2="1"><stop offset="0" stop-color="#000" stop-opacity=".28"/><stop offset="1" stop-color="#000" stop-opacity="0"/></linearGradient></defs><rect x="1436" y="0" width="284" height="3" fill="url(#tsh)"/>
</svg>
<svg style="left:1285px;top:1019px" width="22" height="21"><path d="M5 16V3" stroke="#d02020" stroke-width="1.6"/><path d="M2 5L5 0L8 5Z" fill="#d02020"/><path d="M5 16L13 8" stroke="#20a040" stroke-width="1.4"/><path d="M10 7L15 6L14 11Z" fill="#20a040"/><path d="M5 16H16" stroke="#3060d0" stroke-width="1.6"/><path d="M15 13L20 16L15 19Z" fill="#3060d0"/></svg>
<div class="a" style="left:1310px;top:1021px;width:1px;height:18px;background:#a0a0a0;box-shadow:1px 0 0 #fff"></div>
<div class="t" style="left:1314px;top:1022px;font-family:'Liberation Sans',sans-serif;font-weight:bold;font-size:13px">X</div>
<div class="a" style="left:1327px;top:1021px;width:78px;height:18px;background:#f0f0f0;border:1px solid;border-color:#8a8a8a #fff #fff #8a8a8a;box-sizing:border-box;text-align:right;font-family:'Liberation Sans',sans-serif;font-weight:bold;font-size:13px;line-height:17px;padding-right:3px;white-space:nowrap">-550.4999</div>
<div class="t" style="left:1410px;top:1022px;font-family:'Liberation Sans',sans-serif;font-weight:bold;font-size:13px">Y</div>
<div class="a" style="left:1421px;top:1021px;width:78px;height:18px;background:#f0f0f0;border:1px solid;border-color:#8a8a8a #fff #fff #8a8a8a;box-sizing:border-box;text-align:right;font-family:'Liberation Sans',sans-serif;font-weight:bold;font-size:13px;line-height:17px;padding-right:3px;white-space:nowrap">989.1500</div>
<div class="t" style="left:1504px;top:1022px;font-family:'Liberation Sans',sans-serif;font-weight:bold;font-size:13px">Z</div>
<div class="a" style="left:1516px;top:1021px;width:78px;height:18px;background:#f0f0f0;border:1px solid;border-color:#8a8a8a #fff #fff #8a8a8a;box-sizing:border-box;text-align:right;font-family:'Liberation Sans',sans-serif;font-weight:bold;font-size:13px;line-height:17px;padding-right:3px;white-space:nowrap">970.0000</div>
<div class="a" style="left:1597px;top:1021px;width:77px;height:18px;background:#f0f0f0;border:1px solid;border-color:#8a8a8a #fff #fff #8a8a8a;box-sizing:border-box;text-align:right;font-family:'Liberation Sans',sans-serif;font-weight:bold;font-size:13px;line-height:17px;padding-right:3px;white-space:nowrap">mm</div>
<div class="a" style="left:1676px;top:1021px;width:91px;height:19px;background:#e1e1e1;border-left:1px solid #c8c8c8;border-top:1px solid #ededed;box-sizing:border-box"></div>
<div class="t" style="left:1681px;top:1025px;font-family:'Liberation Sans',sans-serif;font-weight:bold;font-size:13px">Degree</div>
<svg style="left:1755px;top:1030px" width="10" height="7"><path d="M1 1L5 5L9 1" fill="none" stroke="#333" stroke-width="1.1"/></svg>
<div class="a" style="left:1768px;top:1021px;width:75px;height:19px;background:#e1e1e1;border-left:1px solid #c8c8c8;border-top:1px solid #ededed;box-sizing:border-box"></div>
<div class="t" style="left:1773px;top:1025px;font-family:'Liberation Sans',sans-serif;font-weight:bold;font-size:13px">Cart-XY</div>
<svg style="left:1831px;top:1030px" width="10" height="7"><path d="M1 1L5 5L9 1" fill="none" stroke="#333" stroke-width="1.1"/></svg>
<div class="a" style="left:1844px;top:1021px;width:75px;height:19px;background:#e1e1e1;border-left:1px solid #c8c8c8;border-top:1px solid #ededed;box-sizing:border-box"></div>
<div class="t" style="left:1849px;top:1025px;font-family:'Liberation Sans',sans-serif;font-weight:bold;font-size:13px">Prob-On</div>
<svg style="left:1907px;top:1030px" width="10" height="7"><path d="M1 1L5 5L9 1" fill="none" stroke="#333" stroke-width="1.1"/></svg>
<div class="a" style="left:995px;top:1015px;width:151px;height:25px;background:#fff;border-radius:2px;box-shadow:0 0 2px rgba(0,0,0,.25)"></div>
<svg style="left:960px;top:1000px" width="200" height="43" viewBox="960 1000 200 43"><g transform="translate(985,1025) rotate(-15)"><rect x="-13.5" y="-13.500" width="27" height="27" rx="4" fill="#f2571c"/><path d="M8 -6C2 -10 -8 -8 -8 -3C-8 2 8 -1 8 5C8 10 -4 10 -9 6" fill="none" stroke="#fff" stroke-width="4" stroke-linecap="round"/></g><text x="1014" y="1033" font-size="17" font-weight="bold" fill="#126ad8" text-anchor="middle" font-family="Liberation Sans,Noto Sans CJK SC,sans-serif">中</text><circle cx="1035" cy="1024" r="1.8" fill="none" stroke="#126ad8" stroke-width="1.4"/><path d="M1042 1027.500C1043.500 1029 1043 1031 1041 1033" fill="none" stroke="#126ad8" stroke-width="2.2" stroke-linecap="round"/><rect x="1059" y="1019" width="6" height="10.500" rx="3" fill="#126ad8"/><path d="M1056.500 1026A5.500 5.500 0 0 0 1067.500 1026M1062 1031.500V1034M1060 1034.500H1064" fill="none" stroke="#126ad8" stroke-width="1.4"/><rect x="1079.500" y="1021.500" width="14" height="10.500" rx="1.5" fill="none" stroke="#126ad8" stroke-width="1.5"/><path d="M1082 1024.500H1091.500M1082 1027H1091.500" stroke="#126ad8" stroke-width="1.4" stroke-dasharray="1.6 1"/><path d="M1083 1029.700H1090" stroke="#126ad8" stroke-width="1.3"/><defs><linearGradient id="shirt" x1="0" y1="0" x2="0" y2="1"><stop offset="0" stop-color="#7a5cf0"/><stop offset="1" stop-color="#ff7a3c"/></linearGradient></defs><path d="M1103.500 1021L1107 1020C1109 1022 1112 1022 1114 1020L1117.500 1021L1118.500 1025L1115.500 1026V1034H1105.500V1026L1102.500 1025Z" fill="url(#shirt)"/><rect x="1128" y="1021" width="5.500" height="5.500" rx="1.2" fill="#126ad8"/><circle cx="1138" cy="1023.700" r="2.800" fill="#126ad8"/><rect x="1128" y="1028" width="5.500" height="5.500" rx="1.2" fill="#126ad8"/><rect x="1135.200" y="1028" width="5.500" height="5.500" rx="1.2" fill="#126ad8"/></svg>
<div class="a" style="left:1432px;top:985px;width:88px;height:40px;background:#f5f5f5;border-radius:20px;box-shadow:0 1px 4px rgba(0,0,0,.25)"></div>
<svg style="left:1360px;top:960px" width="170" height="83" viewBox="1360 960 170 83"><circle cx="1400" cy="1000" r="30" fill="#58d482" opacity=".7"/><circle cx="1400" cy="1009.500" r="30.500" fill="#58d482" opacity=".65"/><circle cx="1408" cy="1002.500" r="29.500" fill="#58d482" opacity=".65"/><circle cx="1403.500" cy="1004.500" r="30" fill="#45d072"/><circle cx="1404" cy="1005" r="25" fill="#f4f4f4"/><text x="1388" y="1013" font-size="23" fill="#555" font-family="Liberation Sans,sans-serif" letter-spacing="-1.2" font-weight="100" stroke="#f4f4f4" stroke-width=".7">69</text><text x="1411.500" y="1013" font-size="12" fill="#555" font-family="Liberation Sans,sans-serif">%</text><path d="M1444.500 1000V992M1441.200 995L1444.500 991.700L1447.800 995" fill="none" stroke="#2a8cf0" stroke-width="1.3"/><text x="1462" y="999.500" font-size="9.800" fill="#222" font-family="Liberation Sans,sans-serif">2.2K/s</text><text x="1440.500" y="1018" font-size="10" fill="#777" font-family="Liberation Sans,sans-serif">CPU</text><text x="1464" y="1018" font-size="10" fill="#30d070" font-family="Liberation Sans,sans-serif">48℃</text><circle cx="1503" cy="1004.500" r="8" fill="#2a8cf0"/><path d="M1499 1004.500H1507M1503 1000.500V1008.500" stroke="#fff" stroke-width="1.8"/></svg>
<div class="t" style="left:1768px;top:1012px;letter-spacing:0.497px;top:1012px;height:24px;line-height:24px;font-size:16px;color:rgba(255,255,255,.6);-webkit-text-stroke:.55px rgba(120,120,120,.8)">CSDN @山涧果子</div>
<div class="a" style="left:326px;top:52px;width:137px;height:331px;background:#f0f0f0;border:1px solid #979797;box-sizing:border-box;box-shadow:3px 3px 5px rgba(0,0,0,.4)"></div>
<div class="a" style="left:328px;top:54px;width:32px;height:327px;background:linear-gradient(90deg,#f3f4f9,#dfe2ec);border-right:1px solid #c9ccd8;box-shadow:1px 0 0 #fafafa"></div>
<div class="a" style="left:330px;top:119px;width:129px;height:32px;background:linear-gradient(#ecf6fd,#c4e5f8);border:1px solid #a4d6f0;border-radius:3px;box-sizing:border-box"></div>
<div class="t" style="left:370px;top:63px;">移动点</div>
<div class="t" style="left:370px;top:95px;">高级指令</div>
<div class="t" style="left:370px;top:127px;">报告指令</div>
<div class="t" style="left:370px;top:162px;">新建组...</div>
<div class="t" style="left:370px;top:194px;">工件阵列...</div>
<div class="t" style="left:370px;top:226px;">自定义...</div>
<div class="t" style="left:370px;top:261px;">变量观察...</div>
<div class="t" style="left:370px;top:293px;">编译</div>
<div class="t" style="left:370px;top:325px;">书签</div>
<div class="t" style="left:370px;top:357px;">碰撞检测</div>
<div class="a" style="left:370px;top:152px;width:92px;height:1px;background:#a8a8b8;box-shadow:0 1px 0 #fff"></div>
<div class="a" style="left:370px;top:251px;width:92px;height:1px;background:#a8a8b8;box-shadow:0 1px 0 #fff"></div>
<div class="a" style="left:460px;top:119px;width:137px;height:200px;background:#f0f0f0;border:1px solid #979797;box-sizing:border-box;box-shadow:3px 3px 5px rgba(0,0,0,.4)"></div>
<div class="a" style="left:462px;top:121px;width:32px;height:196px;background:linear-gradient(90deg,#f3f4f9,#dfe2ec);border-right:1px solid #c9ccd8;box-shadow:1px 0 0 #fafafa"></div>
<div class="a" style="left:464px;top:253px;width:129px;height:31px;background:linear-gradient(#ecf6fd,#c4e5f8);border:1px solid #a4d6f0;border-radius:3px;box-sizing:border-box"></div>
<div class="t" style="left:504px;top:130px;">表头设置</div>
<div class="t" style="left:504px;top:162px;">清空报告</div>
<div class="t" style="left:504px;top:194px;">打印报告</div>
<div class="t" style="left:504px;top:226px;">文件输出</div>
<div class="t" style="left:504px;top:261px;">插入注释</div>
<div class="t" style="left:504px;top:293px;">定义变量...</div>
<div class="a" style="left:504px;top:251px;width:92px;height:1px;background:#a8a8b8;box-shadow:0 1px 0 #fff"></div>
<svg style="left:0;top:0" width="620" height="400" viewBox="0 0 620 400">
<path d="M447 67L451.5 71L447 75Z" fill="#000"/>
<path d="M447 99L451.5 103L447 107Z" fill="#000"/>
<path d="M447 131L451.5 135L447 139Z" fill="#000"/>
<path d="M447 329L451.5 333L447 337Z" fill="#000"/>
<g transform="translate(345,71)"><path d="M-1 -9L-9 2L6 5Z" fill="none" stroke="#3c8cb0" stroke-width="1"/><circle cx="-1" cy="-9" r="2.4" fill="url(#rsO)"/><circle cx="-9" cy="2" r="2.4" fill="url(#rsO)"/><circle cx="6" cy="5" r="2.4" fill="url(#rsO)"/></g>
<g transform="translate(345,103)"><rect x="-6" y="-9" width="13" height="1.9" fill="#88a8e8" stroke="#4a70d0" stroke-width=".3"/><rect x="-4" y="-5.2" width="11" height="1.9" fill="#88a8e8" stroke="#4a70d0" stroke-width=".3"/><rect x="-6" y="2" width="13" height="1.9" fill="#88a8e8" stroke="#4a70d0" stroke-width=".3"/><rect x="-4" y="5.8" width="11" height="1.9" fill="#88a8e8" stroke="#4a70d0" stroke-width=".3"/><rect x="-9" y="-1.5" width="14" height="2.4" fill="#20d020"/><rect x="8" y="-1.6" width="2.6" height="2.6" fill="#20c020"/></g>
<g transform="translate(345,135)"><rect x="-10" y="-10" width="16" height="18" fill="#e8f0ff" stroke="#3c5cd0" stroke-width="1.2"/><rect x="-8" y="-8" width="12" height="11" fill="#70b8f0"/><path d="M-8 3L-4 -3L0 1L4 -2V3Z" fill="#308030"/><path d="M-8 -2C-4 -5 0 -3 4 -5V-8H-8Z" fill="#c8e8ff"/><text x="-3" y="12" font-size="6.5" font-weight="bold" fill="#c01010" font-family="Liberation Sans,sans-serif">CMD</text></g>
<g transform="translate(345,170)"><g transform="translate(2,-1)"><path d="M-5.5 -8.0H1.5L5.5 -4.0V8.0H-5.5Z" fill="url(#docG)" stroke="#5a7ad0" stroke-width="1"/><path d="M1.5 -8.0V-4.0H5.5" fill="#fff" stroke="#5a7ad0" stroke-width=".8"/></g><g transform="translate(5,2)"><path d="M-5.5 -7.5H1.5L5.5 -3.5V7.5H-5.5Z" fill="url(#docG)" stroke="#5a7ad0" stroke-width="1"/><path d="M1.5 -7.5V-3.5H5.5" fill="#fff" stroke="#5a7ad0" stroke-width=".8"/></g><path d="M2 0H8M2 2.5H8M2 5H8" stroke="#5a7ad0" stroke-width=".7"/><path d="M-8 -11V0" stroke="#b04020" stroke-width="1.6"/><circle cx="-8" cy="1" r="2.2" fill="url(#rsO)"/><rect x="-11" y="5" width="5" height="5" fill="#d0e0ff" stroke="#3050c0" stroke-width="1"/></g>
<g transform="translate(345,203)"><rect x="-11" y="-11" width="10" height="9" fill="#f4f8ff" stroke="#3c5cb0" stroke-width="1"/><path d="M-8.5 -9V-4" stroke="#2848b0" stroke-width="1"/><path d="M-7 -6.5L-4.8 -8.7L-2.5999999999999996 -6.5L-4.8 -4.3Z" fill="none" stroke="#2848b0" stroke-width=".9"/><rect x="1" y="-11" width="10" height="9" fill="#f4f8ff" stroke="#30e030" stroke-width="1"/><path d="M3.5 -9V-4" stroke="#2848b0" stroke-width="1"/><path d="M5 -6.5L7.2 -8.7L9.4 -6.5L7.2 -4.3Z" fill="none" stroke="#2848b0" stroke-width=".9"/><rect x="-11" y="1" width="10" height="9" fill="#f4f8ff" stroke="#30e030" stroke-width="1"/><path d="M-8.5 3V8" stroke="#2848b0" stroke-width="1"/><path d="M-7 5.5L-4.8 3.3L-2.5999999999999996 5.5L-4.8 7.7Z" fill="none" stroke="#2848b0" stroke-width=".9"/><rect x="1" y="1" width="10" height="9" fill="#f4f8ff" stroke="#30e030" stroke-width="1"/><path d="M3.5 3V8" stroke="#2848b0" stroke-width="1"/><path d="M5 5.5L7.2 3.3L9.4 5.5L7.2 7.7Z" fill="none" stroke="#2848b0" stroke-width=".9"/></g>
<g transform="translate(345,234)"><rect x="-6" y="-10" width="14" height="1.9" fill="#58a8a0" stroke="#388880" stroke-width=".3"/><rect x="-11" y="-5.5" width="14" height="1.9" fill="#f07070" stroke="#d04040" stroke-width=".3"/><rect x="-8" y="-1" width="14" height="1.9" fill="#88a8e8" stroke="#4a70d0" stroke-width=".3"/><rect x="-6" y="3.5" width="10" height="1.9" fill="#58a8a0" stroke="#388880" stroke-width=".3"/><circle cx="7" cy="6" r="5" fill="#1a6cd0" stroke="#0a4ca0" stroke-width=".6"/><text x="4.2" y="9.5" font-size="9" font-weight="bold" fill="#fff" font-family="Liberation Sans,sans-serif">?</text></g>
<g transform="translate(345,269)"><rect x="-10.5" y="-7.5" width="21" height="15" fill="#fff" stroke="#6a88c8" stroke-width="1"/><rect x="-10" y="-7" width="20" height="2.6" fill="#88b0f0"/><text x="-8.5" y="4.5" font-size="8.5" fill="#111" font-family="Liberation Sans,sans-serif">var:</text></g>
<g transform="translate(345,301)"><path d="M-7 -12V-5M0 -12V-5M7 -12V-5" stroke="#3060d0" stroke-width="1"/><path d="M-9 -6.5L-7 -3L-5 -6.5ZM-2 -6.5L0 -3L2 -6.5ZM5 -6.5L7 -3L9 -6.5Z" fill="#3060d0"/><rect x="-9.5" y="0" width="19" height="11" fill="#e8ecf8" stroke="#6a80b8" stroke-width="1"/><path d="M-8 2.5H8" stroke="#4a5a90" stroke-width=".9" stroke-dasharray="1 1"/><path d="M-8 4.5H8" stroke="#4a5a90" stroke-width=".9" stroke-dasharray="1 1"/><path d="M-8 6.5H8" stroke="#4a5a90" stroke-width=".9" stroke-dasharray="1 1"/><path d="M-8 8.5H8" stroke="#4a5a90" stroke-width=".9" stroke-dasharray="1 1"/></g>
<g transform="translate(345,333)"><rect x="-8.5" y="-6.5" width="17" height="13" rx="2" fill="url(#docG)" stroke="#5a7ad8" stroke-width="1.2"/></g>
<g transform="translate(345,365)"><rect x="-6" y="-10" width="13" height="1.9" fill="#58a8a0" stroke="#388880" stroke-width=".3"/><rect x="-11" y="-5.5" width="14" height="1.9" fill="#f07070" stroke="#d04040" stroke-width=".3"/><rect x="-8" y="-1" width="13" height="1.9" fill="#88a8e8" stroke="#4a70d0" stroke-width=".3"/><rect x="-6" y="3.5" width="11" height="1.9" fill="#58a8a0" stroke="#388880" stroke-width=".3"/><path d="M9.5 -13V8" stroke="#e02808" stroke-width="2.2"/><circle cx="9.5" cy="9" r="2.4" fill="url(#rsO)"/></g>
<g transform="translate(479,138)"><rect x="-10" y="-9" width="17" height="14" fill="#fff" stroke="#8890b0" stroke-width=".8"/><rect x="-10" y="-9" width="17" height="3" fill="#4a78e0"/><path d="M-10 -4.5H7" stroke="#e04040" stroke-width="1"/><path d="M-10 -1.5H7M-10 1.5H7M-6 -4V5M-2 -4V5M2 -4V5" stroke="#6870a0" stroke-width=".7"/><g transform="translate(6,6) scale(.6)"><g transform="translate(0,0)"><polygon points="8.4,-1.1 8.4,1.1 5.8,1.6 5.2,3.0 6.7,5.2 5.2,6.7 3.0,5.2 1.6,5.8 1.1,8.4 -1.1,8.4 -1.6,5.8 -3.0,5.2 -5.2,6.7 -6.7,5.2 -5.2,3.0 -5.8,1.6 -8.4,1.1 -8.4,-1.1 -5.8,-1.6 -5.2,-3.0 -6.7,-5.2 -5.2,-6.7 -3.0,-5.2 -1.6,-5.8 -1.1,-8.4 1.1,-8.4 1.6,-5.8 3.0,-5.2 5.2,-6.7 6.7,-5.2 5.2,-3.0 5.8,-1.6" fill="#f0a818" stroke="#b84800" stroke-width="1"/><circle r="2.500" fill="#ffe9a8"/><rect x="-1.3" y="-10" width="2.8" height="9" fill="#222"/></g></g></g>
<g transform="translate(479,170)"><g transform="translate(-1,-1)"><rect x="-10" y="-10" width="16" height="18" fill="#e8f0ff" stroke="#3c5cd0" stroke-width="1.2"/><rect x="-8" y="-8" width="12" height="11" fill="#70b8f0"/><path d="M-8 3L-4 -3L0 1L4 -2V3Z" fill="#308030"/><path d="M-8 -2C-4 -5 0 -3 4 -5V-8H-8Z" fill="#c8e8ff"/></g><path d="M-2 8L4 3L10 5L4 10Z" fill="#f0b8c0" stroke="#d07080" stroke-width=".8"/></g>
<g transform="translate(479,202)"><path d="M-7 -3L-4 -11H4L7 -3Z" fill="#b8dcfc" stroke="#88a8d0" stroke-width=".6"/><path d="M-10 -3H8L10 1V6H-8L-10 3Z" fill="#d8d8d8" stroke="#909090" stroke-width=".8"/><path d="M-8 6L-6 9H8L10 6" fill="#b0b0b0" stroke="#808080" stroke-width=".6"/><ellipse cx="-3" cy="2" rx="4" ry="1.2" fill="#606060"/><rect x="3" y="3" width="8" height="8" fill="#f0f6ff" stroke="#3060d0" stroke-width="1"/><path d="M5 6H9M5 8H9" stroke="#3060d0" stroke-width=".8"/></g>
<g transform="translate(479,234)"><g transform="translate(-2,-2)"><path d="M-7.0 -9.0H3.0L7.0 -5.0V9.0H-7.0Z" fill="url(#docG)" stroke="#5a7ad0" stroke-width="1"/><path d="M3.0 -9.0V-5.0H7.0" fill="#fff" stroke="#5a7ad0" stroke-width=".8"/></g><path d="M-6 -6H1M-6 -3.5H3M-6 -1H3M-6 1.5H3M-6 4H1" stroke="#5a7ad0" stroke-width=".8"/><path d="M1 7H7" stroke="#20a020" stroke-width="2.2"/><path d="M6 3.5L10.5 7L6 10.5Z" fill="#20a020"/></g>
<g transform="translate(479,269)"><rect x="-7" y="-9" width="16" height="19" fill="#f4f8ff" stroke="#4a68c8" stroke-width="1.2"/><rect x="-6.5" y="-8.5" width="15" height="2.5" fill="#4a80e8"/><path d="M-3 -3H7M-3 -.5H7M-3 2H7M-3 4.500H7M-3 7H7" stroke="#20e8e8" stroke-width="1.2"/><path d="M-11 -8H-6" stroke="#20a020" stroke-width="2"/><path d="M-7 -11L-3 -8L-7 -5Z" fill="#20a020"/></g>
<g transform="translate(479,301)"><path d="M-7 -10H-10V10H-7M7 -10H10V10H7" fill="none" stroke="#283878" stroke-width="1.8"/><path d="M-7 -6L0 8L7 -6L0 1Z" fill="#2848d8"/></g>
</svg>
</body></html>
